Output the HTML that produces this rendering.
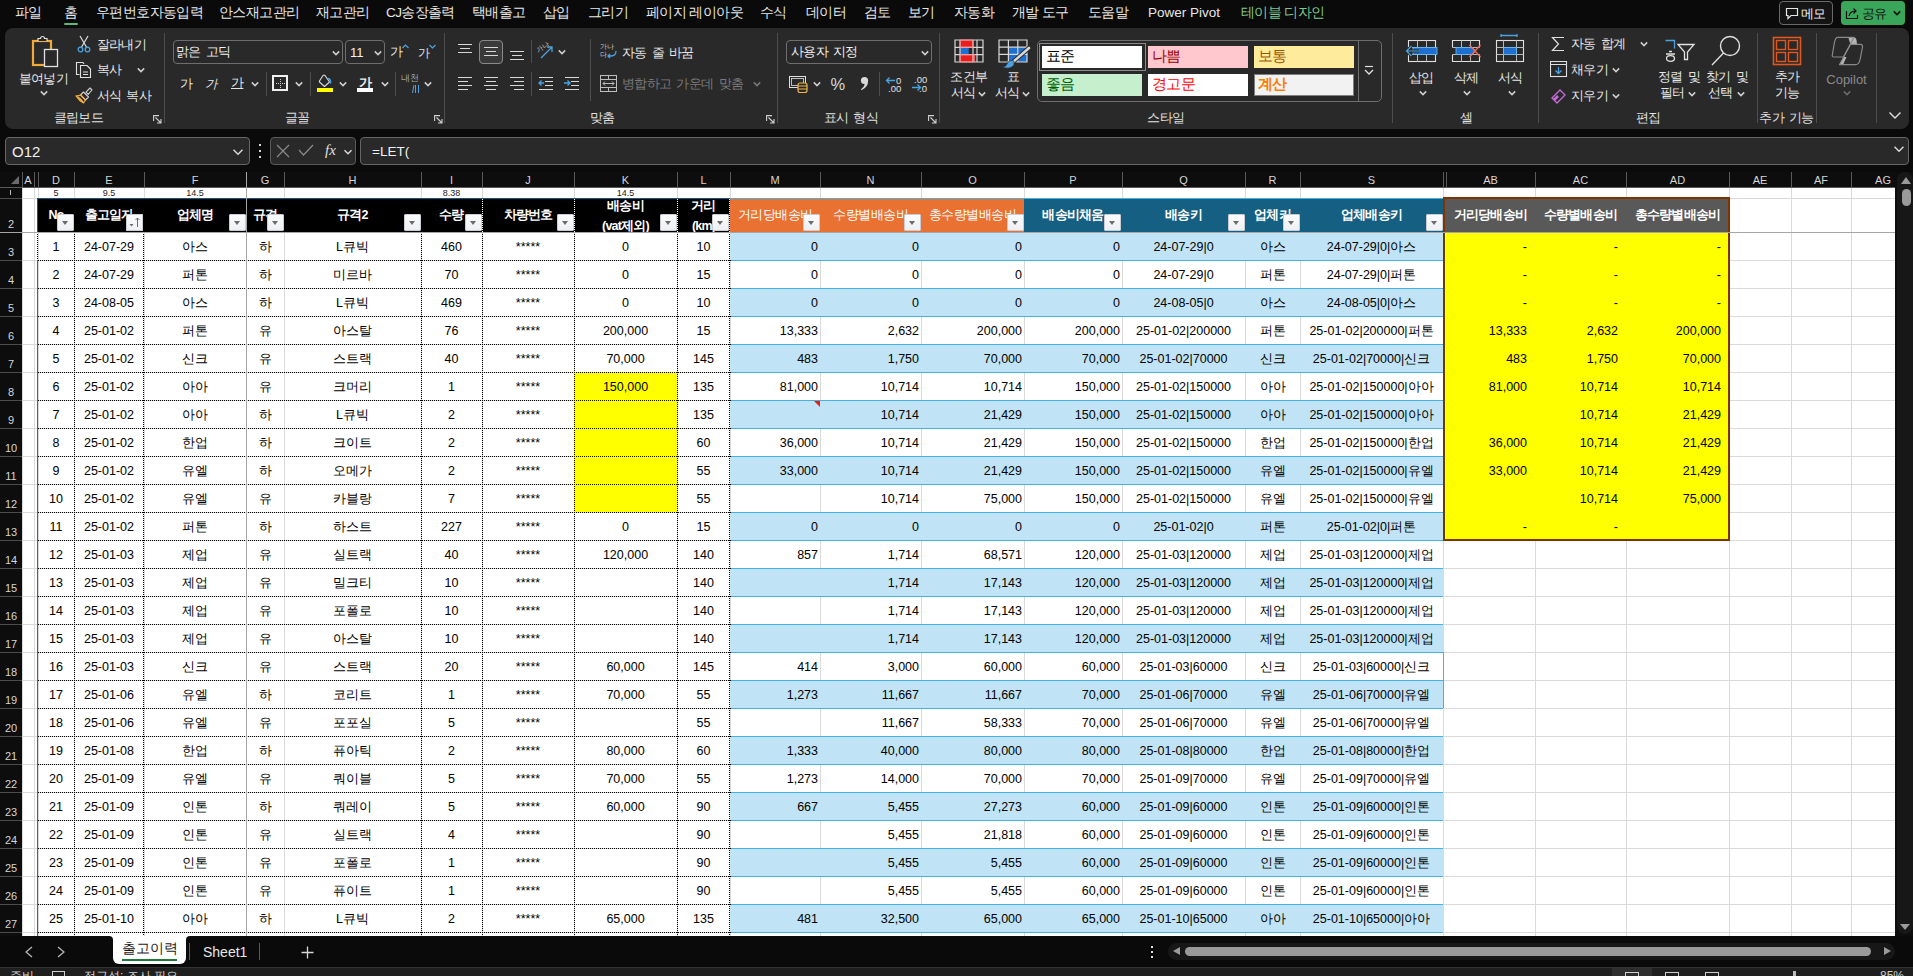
<!DOCTYPE html><html><head><meta charset="utf-8"><style>
*{margin:0;padding:0;box-sizing:border-box}
html,body{width:1913px;height:976px;overflow:hidden;background:#0a0a0a;font-family:"Liberation Sans",sans-serif;}
.a{position:absolute}
svg text{font-family:"Liberation Sans",sans-serif}
.t{position:absolute;white-space:nowrap;line-height:1}
.cell{padding-top:2px;position:absolute;display:flex;align-items:center;white-space:nowrap;font-size:12.5px;color:#000;overflow:hidden;line-height:1}
.cc{justify-content:center}
.cr{justify-content:flex-end;padding-right:2px}
.hd{letter-spacing:-0.8px;position:absolute;display:flex;align-items:center;justify-content:center;white-space:nowrap;font-size:12.5px;color:#fff;font-weight:bold;overflow:hidden;line-height:1}
.fb{position:absolute;width:17px;height:17px;background:linear-gradient(#fafbfc,#eef0f3);border:1px solid #c9cdd3;border-radius:1px}
.fb:after{content:"";position:absolute;left:4px;top:6px;border-left:3.5px solid transparent;border-right:3.5px solid transparent;border-top:4px solid #6b6b6b}
.ch{position:absolute;top:172px;height:15px;display:flex;align-items:center;justify-content:center;font-size:11px;color:#d6d6d6;padding-top:1px}
.rh{position:absolute;left:0;width:22px;display:flex;align-items:flex-end;justify-content:center;font-size:11px;color:#d6d6d6;padding-bottom:2px}
.mt{position:absolute;top:5px;font-size:13.5px;color:#e6e6e6;white-space:nowrap;line-height:16px}
.rl{position:absolute;top:111px;font-size:12.5px;color:#e6e6e6;white-space:nowrap;line-height:14px}
.rt{position:absolute;font-size:12.5px;color:#e6e6e6;white-space:nowrap;line-height:14px}
.sep{position:absolute;width:1px;background:#4a4a4a}
</style></head><body>
<div class="mt" style="left:15px;color:#e6e6e6;letter-spacing:-0.6px;">파일</div>
<div class="mt" style="left:64px;color:#e6e6e6;letter-spacing:-0.6px;">홈</div>
<div class="mt" style="left:96px;color:#e6e6e6;letter-spacing:-0.6px;">우편번호자동입력</div>
<div class="mt" style="left:219px;color:#e6e6e6;letter-spacing:-0.6px;">안스재고관리</div>
<div class="mt" style="left:316px;color:#e6e6e6;letter-spacing:-0.6px;">재고관리</div>
<div class="mt" style="left:386px;color:#e6e6e6;letter-spacing:-0.6px;">CJ송장출력</div>
<div class="mt" style="left:472px;color:#e6e6e6;letter-spacing:-0.6px;">택배출고</div>
<div class="mt" style="left:543px;color:#e6e6e6;letter-spacing:-0.6px;">삽입</div>
<div class="mt" style="left:588px;color:#e6e6e6;letter-spacing:-0.6px;">그리기</div>
<div class="mt" style="left:646px;color:#e6e6e6;letter-spacing:-0.6px;">페이지 레이아웃</div>
<div class="mt" style="left:760px;color:#e6e6e6;letter-spacing:-0.6px;">수식</div>
<div class="mt" style="left:806px;color:#e6e6e6;letter-spacing:-0.6px;">데이터</div>
<div class="mt" style="left:864px;color:#e6e6e6;letter-spacing:-0.6px;">검토</div>
<div class="mt" style="left:908px;color:#e6e6e6;letter-spacing:-0.6px;">보기</div>
<div class="mt" style="left:954px;color:#e6e6e6;letter-spacing:-0.6px;">자동화</div>
<div class="mt" style="left:1012px;color:#e6e6e6;letter-spacing:-0.6px;">개발 도구</div>
<div class="mt" style="left:1088px;color:#e6e6e6;letter-spacing:-0.6px;">도움말</div>
<div class="mt" style="left:1148px;color:#e6e6e6;">Power Pivot</div>
<div class="mt" style="left:1241px;color:#7fc78f;letter-spacing:-0.6px;">테이블 디자인</div>
<div style="position:absolute;left:64px;top:23px;width:14px;height:2px;background:#5fb878;border-radius:1px"></div>
<div style="position:absolute;left:5px;top:28px;width:1904px;height:101px;background:#292929;border-radius:8px"></div>
<div style="position:absolute;left:164px;top:33px;width:1px;height:90px;background:#4d4d4d"></div>
<div style="position:absolute;left:444px;top:33px;width:1px;height:90px;background:#4d4d4d"></div>
<div style="position:absolute;left:777px;top:33px;width:1px;height:90px;background:#4d4d4d"></div>
<div style="position:absolute;left:939px;top:33px;width:1px;height:90px;background:#4d4d4d"></div>
<div style="position:absolute;left:1392px;top:33px;width:1px;height:90px;background:#4d4d4d"></div>
<div style="position:absolute;left:1538px;top:33px;width:1px;height:90px;background:#4d4d4d"></div>
<div style="position:absolute;left:1757px;top:33px;width:1px;height:90px;background:#4d4d4d"></div>
<div style="position:absolute;left:1816px;top:33px;width:1px;height:90px;background:#4d4d4d"></div>
<div style="position:absolute;left:1876px;top:33px;width:1px;height:90px;background:#4d4d4d"></div>
<div style="position:absolute;left:590px;top:39px;width:1px;height:62px;background:#4d4d4d"></div>
<div style="position:absolute;left:266px;top:72px;width:1px;height:24px;background:#4d4d4d"></div>
<div style="position:absolute;left:310px;top:72px;width:1px;height:24px;background:#4d4d4d"></div>
<div style="position:absolute;left:395px;top:72px;width:1px;height:24px;background:#4d4d4d"></div>
<div style="position:absolute;left:531px;top:40px;width:1px;height:23px;background:#4d4d4d"></div>
<div style="position:absolute;left:531px;top:72px;width:1px;height:24px;background:#4d4d4d"></div>
<div style="position:absolute;left:879px;top:72px;width:1px;height:24px;background:#4d4d4d"></div>
<div class="t" style="left:33.5px;width:90px;text-align:center;top:112.4px;font-size:12.5px;color:#e0e0e0;letter-spacing:-0.6px;word-spacing:2px;">클립보드</div>
<div class="t" style="left:252.0px;width:90px;text-align:center;top:112.4px;font-size:12.5px;color:#e0e0e0;letter-spacing:-0.6px;word-spacing:2px;">글꼴</div>
<div class="t" style="left:557.5px;width:90px;text-align:center;top:112.4px;font-size:12.5px;color:#e0e0e0;letter-spacing:-0.6px;word-spacing:2px;">맞춤</div>
<div class="t" style="left:806.0px;width:90px;text-align:center;top:112.4px;font-size:12.5px;color:#e0e0e0;letter-spacing:-0.6px;word-spacing:2px;">표시 형식</div>
<div class="t" style="left:1121.0px;width:90px;text-align:center;top:112.4px;font-size:12.5px;color:#e0e0e0;letter-spacing:-0.6px;word-spacing:2px;">스타일</div>
<div class="t" style="left:1421.0px;width:90px;text-align:center;top:112.4px;font-size:12.5px;color:#e0e0e0;letter-spacing:-0.6px;word-spacing:2px;">셀</div>
<div class="t" style="left:1603.0px;width:90px;text-align:center;top:112.4px;font-size:12.5px;color:#e0e0e0;letter-spacing:-0.6px;word-spacing:2px;">편집</div>
<div class="t" style="left:1741.5px;width:90px;text-align:center;top:112.4px;font-size:12.5px;color:#e0e0e0;letter-spacing:-0.6px;word-spacing:2px;">추가 기능</div>
<svg class="a" style="left:153px;top:115px;" width="9" height="9" viewBox="0 0 9 9"><path d="M0.6 6V0.6H6" fill="none" stroke="#d0d0d0" stroke-width="1.1"/><path d="M2.5 2.5L8 8M8 4V8H4" fill="none" stroke="#d0d0d0" stroke-width="1.1"/></svg>
<svg class="a" style="left:434px;top:115px;" width="9" height="9" viewBox="0 0 9 9"><path d="M0.6 6V0.6H6" fill="none" stroke="#d0d0d0" stroke-width="1.1"/><path d="M2.5 2.5L8 8M8 4V8H4" fill="none" stroke="#d0d0d0" stroke-width="1.1"/></svg>
<svg class="a" style="left:766px;top:115px;" width="9" height="9" viewBox="0 0 9 9"><path d="M0.6 6V0.6H6" fill="none" stroke="#d0d0d0" stroke-width="1.1"/><path d="M2.5 2.5L8 8M8 4V8H4" fill="none" stroke="#d0d0d0" stroke-width="1.1"/></svg>
<svg class="a" style="left:928px;top:115px;" width="9" height="9" viewBox="0 0 9 9"><path d="M0.6 6V0.6H6" fill="none" stroke="#d0d0d0" stroke-width="1.1"/><path d="M2.5 2.5L8 8M8 4V8H4" fill="none" stroke="#d0d0d0" stroke-width="1.1"/></svg>
<svg class="a" style="left:30px;top:35px;" width="30" height="33" viewBox="0 0 30 33"><rect x="3" y="6" width="18" height="24" fill="none" stroke="#f2a93b" stroke-width="2.2"/><path d="M8 6 V3.5 H10.5 A2 2 0 0 1 14.5 3.5 H17 V6" fill="#292929" stroke="#e0e0e0" stroke-width="1.2"/><rect x="14.5" y="14.5" width="13" height="17" fill="#292929" stroke="#e0e0e0" stroke-width="1.3"/></svg>
<div class="t" style="left:13.5px;width:60px;text-align:center;top:72.9px;font-size:12.5px;color:#e6e6e6;letter-spacing:-0.6px;word-spacing:2px;">붙여넣기</div>
<svg class="a" style="left:39px;top:89px;" width="10" height="8" viewBox="0 0 10 8"><path d="M1.7999999999999998 2.4 L5 5.6 L8.2 2.4" fill="none" stroke="#d0d0d0" stroke-width="1.5"/></svg>
<svg class="a" style="left:77px;top:35px;" width="14" height="18" viewBox="0 0 14 18"><path d="M3 1 L10 13 M11 1 L4 13" stroke="#e0e0e0" stroke-width="1.2" fill="none"/><circle cx="3.5" cy="14.5" r="2.3" fill="none" stroke="#4aa3e0" stroke-width="1.3"/><circle cx="10.5" cy="14.5" r="2.3" fill="none" stroke="#4aa3e0" stroke-width="1.3"/></svg>
<div class="t" style="left:96.5px;top:38.7px;font-size:12.5px;color:#e6e6e6;letter-spacing:-0.6px;word-spacing:2px;">잘라내기</div>
<svg class="a" style="left:75px;top:61px;" width="18" height="18" viewBox="0 0 18 18"><path d="M4.5 13.5 H1.5 V1.5 H8 L9 3" fill="none" stroke="#e0e0e0" stroke-width="1.1"/><path d="M5.5 4.5 H12 L15.5 8 V16.5 H5.5 Z" fill="none" stroke="#e0e0e0" stroke-width="1.1"/><path d="M8 11H13M8 13.5H13" stroke="#e0e0e0" stroke-width="1"/></svg>
<div class="t" style="left:96.5px;top:64.4px;font-size:12.5px;color:#e6e6e6;letter-spacing:-0.6px;word-spacing:2px;">복사</div>
<svg class="a" style="left:135.5px;top:66px;" width="10" height="8" viewBox="0 0 10 8"><path d="M1.7999999999999998 2.4 L5 5.6 L8.2 2.4" fill="none" stroke="#d0d0d0" stroke-width="1.5"/></svg>
<svg class="a" style="left:75px;top:87px;" width="18" height="18" viewBox="0 0 18 18"><path d="M15 1 L17 3 L13.2 7.3 L11 5.2Z" fill="none" stroke="#d0d0d0" stroke-width="1.1" stroke-linejoin="round"/><path d="M8.5 5 L13.5 10 L10.5 13 L5.5 8Z" fill="none" stroke="#d0d0d0" stroke-width="1.1" stroke-linejoin="round"/><path d="M5.5 8 L10.5 13 L8.5 16 Q4.5 14 1 8.8 Q3.5 9.2 5.5 8Z" fill="none" stroke="#f0b040" stroke-width="1.2" stroke-linejoin="round"/><path d="M4 11 L8.5 15.5 L6 13.8Z M3 10 Q6 12 8 15" fill="#f0b040" stroke="#f0b040" stroke-width="1.3"/></svg>
<div class="t" style="left:96.5px;top:90.4px;font-size:12.5px;color:#e6e6e6;letter-spacing:-0.6px;word-spacing:2px;">서식 복사</div>
<div style="position:absolute;left:173px;top:40px;width:170px;height:24px;border:1px solid #6e6e6e;border-radius:4px;background:#292929"></div>
<div class="t" style="left:176px;top:46.4px;font-size:12.5px;color:#f0f0f0;letter-spacing:-0.6px;word-spacing:2px;">맑은 고딕</div>
<svg class="a" style="left:331px;top:49px;" width="10" height="8" viewBox="0 0 10 8"><path d="M1.7999999999999998 2.4 L5 5.6 L8.2 2.4" fill="none" stroke="#d0d0d0" stroke-width="1.5"/></svg>
<div style="position:absolute;left:345px;top:40px;width:40px;height:24px;border:1px solid #6e6e6e;border-radius:4px;background:#292929"></div>
<div class="t" style="left:350px;top:46.1px;font-size:13px;color:#f0f0f0;">11</div>
<svg class="a" style="left:373px;top:49px;" width="10" height="8" viewBox="0 0 10 8"><path d="M1.7999999999999998 2.4 L5 5.6 L8.2 2.4" fill="none" stroke="#d0d0d0" stroke-width="1.5"/></svg>
<div class="t" style="left:390px;top:46.4px;font-size:12.5px;color:#e6e6e6;letter-spacing:-0.6px;word-spacing:2px;">가</div>
<svg class="a" style="left:402px;top:44px;" width="7" height="5" viewBox="0 0 7 5"><path d="M0.5 4 L3.5 1 L6.5 4" fill="none" stroke="#4aa3e0" stroke-width="1.2"/></svg>
<div class="t" style="left:418px;top:47.8px;font-size:11.5px;color:#e6e6e6;letter-spacing:-0.6px;word-spacing:2px;">가</div>
<svg class="a" style="left:429px;top:44px;" width="7" height="5" viewBox="0 0 7 5"><path d="M0.5 1 L3.5 4 L6.5 1" fill="none" stroke="#4aa3e0" stroke-width="1.2"/></svg>
<div class="t" style="left:180px;top:78.4px;font-size:12.5px;color:#e6e6e6;letter-spacing:-0.6px;word-spacing:2px;">가</div>
<div class="t" style="left:205px;top:78.4px;font-size:12.5px;color:#e6e6e6;letter-spacing:-0.6px;word-spacing:2px;font-style:italic">가</div>
<div class="t" style="left:231px;top:77.4px;font-size:12.5px;color:#e6e6e6;letter-spacing:-0.6px;word-spacing:2px;text-decoration:underline">가</div>
<svg class="a" style="left:250px;top:80px;" width="10" height="8" viewBox="0 0 10 8"><path d="M1.7999999999999998 2.4 L5 5.6 L8.2 2.4" fill="none" stroke="#d0d0d0" stroke-width="1.5"/></svg>
<svg class="a" style="left:294px;top:80px;" width="10" height="8" viewBox="0 0 10 8"><path d="M1.7999999999999998 2.4 L5 5.6 L8.2 2.4" fill="none" stroke="#d0d0d0" stroke-width="1.5"/></svg>
<svg class="a" style="left:338px;top:80px;" width="10" height="8" viewBox="0 0 10 8"><path d="M1.7999999999999998 2.4 L5 5.6 L8.2 2.4" fill="none" stroke="#d0d0d0" stroke-width="1.5"/></svg>
<svg class="a" style="left:380px;top:80px;" width="10" height="8" viewBox="0 0 10 8"><path d="M1.7999999999999998 2.4 L5 5.6 L8.2 2.4" fill="none" stroke="#d0d0d0" stroke-width="1.5"/></svg>
<svg class="a" style="left:423px;top:80px;" width="10" height="8" viewBox="0 0 10 8"><path d="M1.7999999999999998 2.4 L5 5.6 L8.2 2.4" fill="none" stroke="#d0d0d0" stroke-width="1.5"/></svg>
<svg class="a" style="left:272px;top:75px;" width="17" height="17" viewBox="0 0 17 17"><rect x="1" y="1" width="14" height="14" fill="none" stroke="#f0f0f0" stroke-width="2"/><path d="M8.5 4V13M4 8.5H13" stroke="#cfcfcf" stroke-width="1" stroke-dasharray="1 1"/></svg>
<svg class="a" style="left:316px;top:73px;" width="18" height="20" viewBox="0 0 18 20"><path d="M7 2.5 Q8 1.5 9 2.5 L13.5 9 L8.5 13.5 L3.5 9 Q3 8.3 3.8 7.5Z" fill="none" stroke="#d8d8d8" stroke-width="1.1" stroke-linejoin="round"/><path d="M12 5.5 Q15 6 14.5 10.5" stroke="#4aa3e0" stroke-width="1.5" fill="none"/><rect x="1" y="15" width="16" height="4" fill="#ffff00"/></svg>
<div class="t" style="left:359px;top:76.2px;font-size:13px;color:#f0f0f0;letter-spacing:-0.6px;word-spacing:2px;font-weight:bold">가</div>
<div style="position:absolute;left:357px;top:88px;width:16px;height:4px;background:#fff"></div>
<div class="t" style="left:401px;top:74.2px;font-size:8.5px;color:#a8a8a8;letter-spacing:-0.5px">내천</div>
<svg class="a" style="left:411px;top:84px;" width="9" height="10" viewBox="0 0 9 10"><path d="M1.5 9 L3 1M4.5 9V1M7.5 9V1" stroke="#4aa3e0" stroke-width="1" fill="none"/></svg>
<svg class="a" style="left:458px;top:44px;" width="16" height="16" viewBox="0 0 16 16"><rect x="0" y="0" width="14" height="1" fill="#d8d8d8"/><rect x="2" y="4" width="10" height="1" fill="#d8d8d8"/><rect x="0" y="8" width="14" height="1" fill="#d8d8d8"/></svg>
<div style="position:absolute;left:479px;top:40px;width:24px;height:24px;border:1px solid #8a8a8a;border-radius:4px;background:#3a3a3a"></div>
<svg class="a" style="left:484px;top:47px;" width="16" height="16" viewBox="0 0 16 16"><rect x="0" y="0" width="14" height="1" fill="#d8d8d8"/><rect x="2" y="4" width="10" height="1" fill="#d8d8d8"/><rect x="0" y="8" width="14" height="1" fill="#d8d8d8"/></svg>
<svg class="a" style="left:510px;top:51px;" width="16" height="16" viewBox="0 0 16 16"><rect x="0" y="0" width="14" height="1" fill="#d8d8d8"/><rect x="2" y="4" width="10" height="1" fill="#d8d8d8"/><rect x="0" y="8" width="14" height="1" fill="#d8d8d8"/></svg>
<svg class="a" style="left:458px;top:77px;" width="16" height="16" viewBox="0 0 16 16"><rect x="0" y="0" width="14" height="1" fill="#d8d8d8"/><rect x="0" y="4" width="10" height="1" fill="#d8d8d8"/><rect x="0" y="8" width="14" height="1" fill="#d8d8d8"/><rect x="0" y="12" width="10" height="1" fill="#d8d8d8"/></svg>
<svg class="a" style="left:484px;top:77px;" width="16" height="16" viewBox="0 0 16 16"><rect x="0" y="0" width="14" height="1" fill="#d8d8d8"/><rect x="2" y="4" width="10" height="1" fill="#d8d8d8"/><rect x="0" y="8" width="14" height="1" fill="#d8d8d8"/><rect x="2" y="12" width="10" height="1" fill="#d8d8d8"/></svg>
<svg class="a" style="left:510px;top:77px;" width="16" height="16" viewBox="0 0 16 16"><rect x="0" y="0" width="14" height="1" fill="#d8d8d8"/><rect x="4" y="4" width="10" height="1" fill="#d8d8d8"/><rect x="0" y="8" width="14" height="1" fill="#d8d8d8"/><rect x="4" y="12" width="10" height="1" fill="#d8d8d8"/></svg>
<svg class="a" style="left:537px;top:42px;" width="18" height="18" viewBox="0 0 18 18"><text x="0" y="9" font-size="7" fill="#cfcfcf" transform="rotate(-35 4 8)">가나</text><path d="M4 16 L15 5 M10 5 H15 V10" stroke="#4aa3e0" stroke-width="1.3" fill="none"/></svg>
<svg class="a" style="left:557px;top:48px;" width="10" height="8" viewBox="0 0 10 8"><path d="M1.7999999999999998 2.4 L5 5.6 L8.2 2.4" fill="none" stroke="#d0d0d0" stroke-width="1.5"/></svg>
<svg class="a" style="left:538px;top:76px;" width="16" height="15" viewBox="0 0 16 15"><path d="M1 1.5H15M7 5.5H15M7 9.5H15M1 13.5H15" stroke="#d8d8d8" stroke-width="1"/><path d="M6 7H1M3.5 4.5L1 7L3.5 9.5" stroke="#4aa3e0" stroke-width="1.3" fill="none"/></svg>
<svg class="a" style="left:564px;top:76px;" width="16" height="15" viewBox="0 0 16 15"><path d="M1 1.5H15M7 5.5H15M7 9.5H15M1 13.5H15" stroke="#d8d8d8" stroke-width="1"/><path d="M0 7H6M3.5 4.5L6 7L3.5 9.5" stroke="#4aa3e0" stroke-width="1.3" fill="none"/></svg>
<svg class="a" style="left:600px;top:42px;" width="18" height="20" viewBox="0 0 18 20"><text x="0" y="7" font-size="7" fill="#cfcfcf">가나</text><text x="0" y="15" font-size="7" fill="#cfcfcf">다</text><path d="M16 9 Q16 14 11 14 H8 M10 12 L8 14 L10 16" stroke="#4aa3e0" stroke-width="1.3" fill="none"/></svg>
<div class="t" style="left:622px;top:46.8px;font-size:12.5px;color:#e6e6e6;letter-spacing:-0.6px;word-spacing:2px;">자동 줄 바꿈</div>
<svg class="a" style="left:600px;top:75px;" width="17" height="17" viewBox="0 0 17 17"><rect x="0.5" y="0.5" width="16" height="16" fill="none" stroke="#bdbdbd"/><path d="M0.5 4.5H16.5M0.5 12.5H16.5M8.5 0.5V4.5M8.5 12.5V16.5" stroke="#bdbdbd"/><path d="M3 8.5H14M5 6.5L3 8.5L5 10.5M12 6.5L14 8.5L12 10.5" stroke="#bdbdbd" fill="none"/></svg>
<div class="t" style="left:622px;top:77.7px;font-size:12.5px;color:#7a7a7a;letter-spacing:-0.6px;word-spacing:2px;">병합하고 가운데 맞춤</div>
<svg class="a" style="left:752px;top:80px;" width="10" height="8" viewBox="0 0 10 8"><path d="M1.7999999999999998 2.4 L5 5.6 L8.2 2.4" fill="none" stroke="#7a7a7a" stroke-width="1.5"/></svg>
<div style="position:absolute;left:786px;top:40px;width:146px;height:24px;border:1px solid #6e6e6e;border-radius:4px;background:#292929"></div>
<div class="t" style="left:791px;top:46.4px;font-size:12.5px;color:#f0f0f0;letter-spacing:-0.6px;word-spacing:2px;">사용자 지정</div>
<svg class="a" style="left:920px;top:49px;" width="10" height="8" viewBox="0 0 10 8"><path d="M1.7999999999999998 2.4 L5 5.6 L8.2 2.4" fill="none" stroke="#d0d0d0" stroke-width="1.5"/></svg>
<svg class="a" style="left:789px;top:76px;" width="19" height="17" viewBox="0 0 19 17"><rect x="0.5" y="0.5" width="16" height="11" fill="none" stroke="#e0e0e0"/><rect x="2.5" y="2.5" width="12" height="7" fill="none" stroke="#e0e0e0" stroke-width="0.8"/><rect x="9" y="7" width="9" height="9.5" rx="2" fill="#292929" stroke="#f2b84b" stroke-width="1.2"/><path d="M9 10H18M9 13H18" stroke="#f2b84b"/></svg>
<svg class="a" style="left:811.5px;top:80px;" width="10" height="8" viewBox="0 0 10 8"><path d="M1.7999999999999998 2.4 L5 5.6 L8.2 2.4" fill="none" stroke="#d0d0d0" stroke-width="1.5"/></svg>
<div class="t" style="left:830.5px;top:75.6px;font-size:16.5px;color:#d8d8d8;">%</div>
<svg class="a" style="left:859px;top:76px;" width="11" height="15" viewBox="0 0 11 15"><circle cx="5.5" cy="4.5" r="3.6" fill="#d8d8d8"/><path d="M8.9 4.5 Q9.5 11 2.5 14.2 L2 13.2 Q5.8 10.5 5.6 7.5Z" fill="#d8d8d8"/></svg>
<svg class="a" style="left:884px;top:75px;" width="19" height="18" viewBox="0 0 19 18"><text x="12" y="9" font-size="9.5" fill="#e0e0e0" font-family="Liberation Sans">0</text><text x="4" y="17" font-size="9.5" fill="#e0e0e0" font-family="Liberation Sans">.00</text><path d="M11 5.5H2.5M5.5 2.5L2.5 5.5L5.5 8.5" stroke="#4aa3e0" stroke-width="1.3" fill="none"/></svg>
<svg class="a" style="left:910px;top:74px;" width="19" height="19" viewBox="0 0 19 19"><text x="4" y="9" font-size="9.5" fill="#e0e0e0" font-family="Liberation Sans">.00</text><text x="9" y="17.5" font-size="9.5" fill="#e0e0e0" font-family="Liberation Sans">.0</text><path d="M2 13.5H10.5M7.5 10.5L10.5 13.5L7.5 16.5" stroke="#4aa3e0" stroke-width="1.3" fill="none"/></svg>
<svg class="a" style="left:954px;top:39px;" width="30" height="24" viewBox="0 0 30 24"><rect x="6" y="1" width="13" height="7.3" fill="#e81e1e"/><rect x="6" y="8.3" width="8.7" height="7.3" fill="#1e6fd0"/><rect x="6" y="15.6" width="14.7" height="7.4" fill="#e81e1e"/><path d="M1 1H29V23H1Z M1 8.3H29 M1 15.6H29 M6 1V23 M19 1V23 M23 1V23" fill="none" stroke="#d8d8d8" stroke-width="1.2"/><path d="M6 1H19V8.3H6Z M6 15.6H20.7V23H6Z" fill="none" stroke="#ff8080" stroke-width="0.8"/></svg>
<div class="t" style="left:939.0px;width:60px;text-align:center;top:71.4px;font-size:12.5px;color:#e6e6e6;letter-spacing:-0.6px;word-spacing:2px;">조건부</div>
<div class="t" style="left:951px;top:87.4px;font-size:12.5px;color:#e6e6e6;letter-spacing:-1px">서식</div>
<svg class="a" style="left:977px;top:90px;" width="10" height="8" viewBox="0 0 10 8"><path d="M1.7999999999999998 2.4 L5 5.6 L8.2 2.4" fill="none" stroke="#d0d0d0" stroke-width="1.5"/></svg>
<svg class="a" style="left:998px;top:39px;" width="34" height="30" viewBox="0 0 34 30"><rect x="10.4" y="8.2" width="18.6" height="14.8" fill="#1e6fd0"/><path d="M1 1H29V23H1Z M1 8.2H29 M1 15.4H29 M10.4 1V23 M19.8 1V23" fill="none" stroke="#d8d8d8" stroke-width="1.2"/><path d="M31 9 L15 23" stroke="#292929" stroke-width="4.5" stroke-linecap="round"/><path d="M31 9 L15 23" stroke="#d8d8d8" stroke-width="2.6" stroke-linecap="round"/><path d="M16 22 Q11 20 9 25 Q8 28 4 28 Q12 31 16 26 Z" fill="#4aa3e0" stroke="#292929" stroke-width="0.6"/></svg>
<div class="t" style="left:998.0px;width:30px;text-align:center;top:71.4px;font-size:12.5px;color:#e6e6e6;letter-spacing:-0.6px;word-spacing:2px;">표</div>
<div class="t" style="left:995px;top:87.4px;font-size:12.5px;color:#e6e6e6;letter-spacing:-1px">서식</div>
<svg class="a" style="left:1021px;top:90px;" width="10" height="8" viewBox="0 0 10 8"><path d="M1.7999999999999998 2.4 L5 5.6 L8.2 2.4" fill="none" stroke="#d0d0d0" stroke-width="1.5"/></svg>
<div style="position:absolute;left:1037px;top:40px;width:345px;height:62px;border:1px solid #6e6e6e;border-radius:5px"></div>
<div style="position:absolute;left:1358px;top:41px;width:1px;height:60px;background:#6e6e6e"></div>
<svg class="a" style="left:1363px;top:65px;" width="12" height="12" viewBox="0 0 12 12"><path d="M2 1.5H10" stroke="#e0e0e0" stroke-width="1.2"/><path d="M2 5 L6 9 L10 5" stroke="#e0e0e0" stroke-width="1.3" fill="none"/></svg>
<div style="position:absolute;left:1039px;top:43px;width:107px;height:28px;border:1.5px solid #8a8a8a"></div>
<div style="position:absolute;left:1042px;top:46px;width:100px;height:22px;background:#ffffff;"></div>
<div class="t" style="left:1046px;top:48.5px;font-size:14.5px;color:#000;letter-spacing:-0.6px;word-spacing:2px;">표준</div>
<div style="position:absolute;left:1148px;top:46px;width:100px;height:22px;background:#ffc7ce;"></div>
<div class="t" style="left:1152px;top:48.5px;font-size:14.5px;color:#9c0006;letter-spacing:-0.6px;word-spacing:2px;">나쁨</div>
<div style="position:absolute;left:1254px;top:46px;width:100px;height:22px;background:#ffeb9c;"></div>
<div class="t" style="left:1258px;top:48.5px;font-size:14.5px;color:#9c5700;letter-spacing:-0.6px;word-spacing:2px;">보통</div>
<div style="position:absolute;left:1042px;top:74px;width:100px;height:22px;background:#c6efce;"></div>
<div class="t" style="left:1046px;top:76.5px;font-size:14.5px;color:#006100;letter-spacing:-0.6px;word-spacing:2px;">좋음</div>
<div style="position:absolute;left:1148px;top:74px;width:100px;height:22px;background:#ffffff;"></div>
<div class="t" style="left:1152px;top:76.5px;font-size:14.5px;color:#ff0000;letter-spacing:-0.6px;word-spacing:2px;">경고문</div>
<div style="position:absolute;left:1254px;top:74px;width:100px;height:22px;background:#f2f2f2;border:1px solid #7f7f7f"></div>
<div class="t" style="left:1258px;top:76.5px;font-size:14.5px;color:#fa7d00;letter-spacing:-0.6px;word-spacing:2px;font-weight:bold">계산</div>
<svg class="a" style="left:1405px;top:40px;" width="34" height="23" viewBox="0 0 34 23"><rect x="3.5" y="0.5" width="27" height="21" fill="none" stroke="#e0e0e0" stroke-width="1.1"/><path d="M12.5 0.5V21.5M21.5 0.5V21.5M3.5 7.5H30.5M3.5 14.5H30.5" stroke="#b8b8b8"/><rect x="8" y="7.5" width="24" height="7" fill="#1e6fd0" stroke="#6cc0f0" stroke-width="0.8"/><path d="M14 11H1.5M6.5 6L1.5 11L6.5 16" stroke="#292929" stroke-width="3" fill="none"/><path d="M14 11H1.5M6.5 6L1.5 11L6.5 16" stroke="#4aa3e0" stroke-width="1.2" fill="none"/></svg>
<div class="t" style="left:1401.5px;width:40px;text-align:center;top:72.4px;font-size:12.5px;color:#e6e6e6;letter-spacing:-0.6px;word-spacing:2px;">삽입</div>
<svg class="a" style="left:1418px;top:89px;" width="10" height="8" viewBox="0 0 10 8"><path d="M1.7999999999999998 2.4 L5 5.6 L8.2 2.4" fill="none" stroke="#d0d0d0" stroke-width="1.5"/></svg>
<svg class="a" style="left:1451px;top:40px;" width="32" height="23" viewBox="0 0 32 23"><path d="M1.5 7.5V0.5H28.5V7.5 M1.5 14.5V21.5H28.5V14.5" fill="none" stroke="#e0e0e0" stroke-width="1.1"/><path d="M10.5 0.5V21.5M19.5 0.5V21.5M1.5 7.5H28.5M1.5 14.5H28.5" stroke="#b8b8b8"/><path d="M5 7.5H21 L25 11 L21 14.5H5Z" fill="#1e6fd0" stroke="#6cc0f0" stroke-width="0.8"/><path d="M18.5 5 L29.5 17 M29.5 5 L18.5 17" stroke="#f06a5a" stroke-width="1.3"/></svg>
<div class="t" style="left:1446.0px;width:40px;text-align:center;top:72.4px;font-size:12.5px;color:#e6e6e6;letter-spacing:-0.6px;word-spacing:2px;">삭제</div>
<svg class="a" style="left:1462px;top:89px;" width="10" height="8" viewBox="0 0 10 8"><path d="M1.7999999999999998 2.4 L5 5.6 L8.2 2.4" fill="none" stroke="#d0d0d0" stroke-width="1.5"/></svg>
<svg class="a" style="left:1495px;top:34px;" width="30" height="29" viewBox="0 0 30 29"><path d="M6 1.5H22M6 0V3M22 0V3" stroke="#4aa3e0" stroke-width="1.3"/><rect x="1.5" y="6.5" width="27" height="21" fill="none" stroke="#e0e0e0" stroke-width="1.1"/><path d="M8.5 6.5V27.5M21.5 6.5V27.5M1.5 13.5H28.5M1.5 20.5H28.5" stroke="#b8b8b8"/><rect x="8.5" y="13.5" width="13" height="7" fill="#1e6fd0" stroke="#6cc0f0" stroke-width="0.8"/></svg>
<div class="t" style="left:1490.0px;width:40px;text-align:center;top:72.4px;font-size:12.5px;color:#e6e6e6;letter-spacing:-0.6px;word-spacing:2px;">서식</div>
<svg class="a" style="left:1506.5px;top:89px;" width="10" height="8" viewBox="0 0 10 8"><path d="M1.7999999999999998 2.4 L5 5.6 L8.2 2.4" fill="none" stroke="#d0d0d0" stroke-width="1.5"/></svg>
<svg class="a" style="left:1551px;top:36px;" width="15" height="16" viewBox="0 0 15 16"><path d="M13 1.5H1.5L7.5 8L1.5 14.5H13" fill="none" stroke="#e0e0e0" stroke-width="1.2"/></svg>
<div class="t" style="left:1571px;top:38.4px;font-size:12.5px;color:#e6e6e6;letter-spacing:-0.6px;word-spacing:2px;">자동 합계</div>
<svg class="a" style="left:1638.5px;top:40px;" width="10" height="8" viewBox="0 0 10 8"><path d="M1.7999999999999998 2.4 L5 5.6 L8.2 2.4" fill="none" stroke="#d0d0d0" stroke-width="1.5"/></svg>
<svg class="a" style="left:1550px;top:61px;" width="18" height="17" viewBox="0 0 18 17"><rect x="0.5" y="0.5" width="16" height="15" fill="none" stroke="#e0e0e0" stroke-width="1.1"/><path d="M0.5 3.5H16.5" stroke="#e0e0e0"/><path d="M8.5 6V12.5M5.5 9.5L8.5 12.5L11.5 9.5" stroke="#4aa3e0" stroke-width="1.3" fill="none"/></svg>
<div class="t" style="left:1571px;top:64.4px;font-size:12.5px;color:#e6e6e6;letter-spacing:-0.6px;word-spacing:2px;">채우기</div>
<svg class="a" style="left:1611px;top:66px;" width="10" height="8" viewBox="0 0 10 8"><path d="M1.7999999999999998 2.4 L5 5.6 L8.2 2.4" fill="none" stroke="#d0d0d0" stroke-width="1.5"/></svg>
<svg class="a" style="left:1550px;top:87px;" width="17" height="17" viewBox="0 0 17 17"><path d="M2 11 L10 3 L15 8 L7 16 Z" fill="none" stroke="#c76bd8" stroke-width="1.3"/><path d="M4 13 L8 9" stroke="#c76bd8" stroke-width="2.5"/></svg>
<div class="t" style="left:1571px;top:90.4px;font-size:12.5px;color:#e6e6e6;letter-spacing:-0.6px;word-spacing:2px;">지우기</div>
<svg class="a" style="left:1611px;top:92px;" width="10" height="8" viewBox="0 0 10 8"><path d="M1.7999999999999998 2.4 L5 5.6 L8.2 2.4" fill="none" stroke="#d0d0d0" stroke-width="1.5"/></svg>
<svg class="a" style="left:1663px;top:38px;" width="33" height="26" viewBox="0 0 33 26"><path d="M2.5 2.5H11.5V10.5" stroke="#4aa3e0" stroke-width="1.3" fill="none"/><path d="M6 13.5H9M3 16H12" stroke="#e0e0e0" stroke-width="1.3"/><ellipse cx="7.5" cy="20.5" rx="4" ry="2.8" fill="none" stroke="#e0e0e0" stroke-width="1.3"/><path d="M15 6.5H31L24.5 14V21.5H21.5V14Z" fill="none" stroke="#e0e0e0" stroke-width="1.3"/></svg>
<div class="t" style="left:1649.0px;width:60px;text-align:center;top:71.4px;font-size:12.5px;color:#e6e6e6;letter-spacing:-0.6px;word-spacing:2px;">정렬 및</div>
<div class="t" style="left:1660px;top:87.4px;font-size:12.5px;color:#e6e6e6;letter-spacing:-1px">필터</div>
<svg class="a" style="left:1687px;top:90px;" width="10" height="8" viewBox="0 0 10 8"><path d="M1.7999999999999998 2.4 L5 5.6 L8.2 2.4" fill="none" stroke="#d0d0d0" stroke-width="1.5"/></svg>
<svg class="a" style="left:1710px;top:35px;" width="32" height="32" viewBox="0 0 32 32"><circle cx="20" cy="11" r="9.5" fill="none" stroke="#e0e0e0" stroke-width="1.4"/><path d="M13.5 18 L2 30" stroke="#e0e0e0" stroke-width="1.4"/></svg>
<div class="t" style="left:1697.0px;width:60px;text-align:center;top:71.4px;font-size:12.5px;color:#e6e6e6;letter-spacing:-0.6px;word-spacing:2px;">찾기 및</div>
<div class="t" style="left:1708px;top:87.4px;font-size:12.5px;color:#e6e6e6;letter-spacing:-1px">선택</div>
<svg class="a" style="left:1736px;top:90px;" width="10" height="8" viewBox="0 0 10 8"><path d="M1.7999999999999998 2.4 L5 5.6 L8.2 2.4" fill="none" stroke="#d0d0d0" stroke-width="1.5"/></svg>
<svg class="a" style="left:1772px;top:36px;" width="30" height="30" viewBox="0 0 30 30"><rect x="1.5" y="1.5" width="27" height="27" fill="none" stroke="#e2571e" stroke-width="1.6"/><rect x="4.5" y="4.5" width="9" height="9" fill="none" stroke="#e2571e" stroke-width="1.4"/><rect x="16.5" y="4.5" width="9" height="9" fill="none" stroke="#e2571e" stroke-width="1.4"/><rect x="4.5" y="16.5" width="9" height="9" fill="none" stroke="#e2571e" stroke-width="1.4"/><rect x="16.5" y="16.5" width="9" height="9" fill="none" stroke="#e2571e" stroke-width="1.4"/></svg>
<div class="t" style="left:1767.0px;width:40px;text-align:center;top:71.4px;font-size:12.5px;color:#e6e6e6;letter-spacing:-0.6px;word-spacing:2px;">추가</div>
<div class="t" style="left:1767.0px;width:40px;text-align:center;top:87.4px;font-size:12.5px;color:#e6e6e6;letter-spacing:-0.6px;word-spacing:2px;">기능</div>
<svg class="a" style="left:1830px;top:36px;" width="34" height="30" viewBox="0 0 34 30"><path d="M18.5 2.2 Q20 1.3 24 1.3 Q26 1.3 26.5 4 L27 8.3 H20.5Z" fill="#b4b4b4"/><path d="M9.5 28.7 L13.5 21 H16.5 L13 28.7Z" fill="#b4b4b4"/><path d="M8 1.3 H24 L13.5 21 H3.5 Q2 21 2.3 19 L4.5 6 Q5.5 1.3 8 1.3Z" fill="none" stroke="#8a8a8a" stroke-width="1.2" stroke-linejoin="round"/><path d="M20.5 8.3 H30.5 Q32.8 8.5 32.5 11 L30.2 23 Q29 28.7 25.5 28.7 H9.5 L20.5 8.3Z" fill="none" stroke="#8a8a8a" stroke-width="1.2" stroke-linejoin="round"/></svg>
<div class="t" style="left:1816.5px;width:60px;text-align:center;top:72.7px;font-size:13px;color:#8a8a8a;">Copilot</div>
<svg class="a" style="left:1841.5px;top:89px;" width="10" height="8" viewBox="0 0 10 8"><path d="M1.7999999999999998 2.4 L5 5.6 L8.2 2.4" fill="none" stroke="#6a6a6a" stroke-width="1.5"/></svg>
<svg class="a" style="left:1888px;top:111px;" width="14" height="9" viewBox="0 0 14 9"><path d="M1.5 1.5 L7 7 L12.5 1.5" fill="none" stroke="#e0e0e0" stroke-width="1.4"/></svg>
<div style="position:absolute;left:1779px;top:1px;width:54px;height:24px;border:1px solid #6a6a6a;border-radius:4px;background:#141414"></div>
<svg class="a" style="left:1785px;top:7px;" width="14" height="13" viewBox="0 0 14 13"><path d="M1.5 1.5H12.5V8.5H6L3 11.5V8.5H1.5Z" fill="none" stroke="#e6e6e6" stroke-width="1.2"/></svg>
<div class="t" style="left:1801px;top:7.1px;font-size:13px;color:#f0f0f0;letter-spacing:-0.6px;word-spacing:2px;">메모</div>
<div style="position:absolute;left:1841px;top:1px;width:64px;height:24px;background:#3aa659;border-radius:4px"></div>
<svg class="a" style="left:1845px;top:6px;" width="14" height="14" viewBox="0 0 14 14"><path d="M1.5 5V12.5H12.5V9" fill="none" stroke="#101010" stroke-width="1.2"/><path d="M4 10 Q5 5 11 5 M8.5 2.5 L11 5 L8.5 7.5" fill="none" stroke="#101010" stroke-width="1.2"/></svg>
<div class="t" style="left:1862px;top:7.1px;font-size:13px;color:#101010;letter-spacing:-0.6px;word-spacing:2px;">공유</div>
<svg class="a" style="left:1892px;top:9px;" width="10" height="8" viewBox="0 0 10 8"><path d="M1.7999999999999998 2.4 L5 5.6 L8.2 2.4" fill="none" stroke="#101010" stroke-width="1.5"/></svg>
<div style="position:absolute;left:5px;top:137px;width:245px;height:28px;background:#292929;border:1px solid #666;border-radius:4px"></div>
<div style="position:absolute;left:270px;top:137px;width:86px;height:28px;background:#292929;border:1px solid #5a5a5a;border-radius:4px"></div>
<div style="position:absolute;left:360px;top:137px;width:1549px;height:28px;background:#292929;border:1px solid #666;border-radius:4px"></div>
<div class="t" style="left:12px;top:144px;font-size:15px;color:#f0f0f0">O12</div>
<svg class="a" style="left:233px;top:148px;" width="10" height="8" viewBox="0 0 10 8"><path d="M0.5 1.75 L5 6.25 L9.5 1.75" fill="none" stroke="#d8d8d8" stroke-width="1.5"/></svg>
<div style="position:absolute;left:259px;top:144px;width:2px;height:2px;background:#d8d8d8"></div>
<div style="position:absolute;left:259px;top:150px;width:2px;height:2px;background:#d8d8d8"></div>
<div style="position:absolute;left:259px;top:156px;width:2px;height:2px;background:#d8d8d8"></div>
<svg class="a" style="left:276px;top:144px;" width="14" height="14" viewBox="0 0 14 14"><path d="M1 1L13 13M13 1L1 13" stroke="#8a8a8a" stroke-width="1.2"/></svg>
<svg class="a" style="left:298px;top:144px;" width="16" height="12" viewBox="0 0 16 12"><path d="M1 6L5.5 11L15 1" fill="none" stroke="#8a8a8a" stroke-width="1.2"/></svg>
<div class="t" style="left:325px;top:143px;font-size:15px;color:#e0e0e0;font-family:'Liberation Serif',serif;font-style:italic">fx</div>
<svg class="a" style="left:343px;top:148px;" width="10" height="8" viewBox="0 0 10 8"><path d="M1.5 2.25 L5 5.75 L8.5 2.25" fill="none" stroke="#d8d8d8" stroke-width="1.5"/></svg>
<svg class="a" style="left:1894px;top:145px;" width="10" height="8" viewBox="0 0 10 8"><path d="M0.5 1.75 L5 6.25 L9.5 1.75" fill="none" stroke="#d8d8d8" stroke-width="1.5"/></svg>
<div class="t" style="left:372px;top:145px;font-size:13.5px;color:#f0f0f0">=LET(</div>
<div style="position:absolute;left:0px;top:172px;width:1895px;height:15px;background:#0d0d0d"></div>
<div style="position:absolute;left:0px;top:187px;width:22px;height:749px;background:#0d0d0d"></div>
<div style="position:absolute;left:22px;top:187px;width:1873px;height:749px;background:#fff"></div>
<div style="position:absolute;left:22px;top:187px;width:1px;height:749px;background:#dadada"></div>
<div style="position:absolute;left:34px;top:187px;width:1px;height:749px;background:#dadada"></div>
<div style="position:absolute;left:38px;top:187px;width:1px;height:749px;background:#dadada"></div>
<div style="position:absolute;left:74px;top:187px;width:1px;height:749px;background:#dadada"></div>
<div style="position:absolute;left:144px;top:187px;width:1px;height:749px;background:#dadada"></div>
<div style="position:absolute;left:246px;top:187px;width:1px;height:749px;background:#dadada"></div>
<div style="position:absolute;left:284px;top:187px;width:1px;height:749px;background:#dadada"></div>
<div style="position:absolute;left:421px;top:187px;width:1px;height:749px;background:#dadada"></div>
<div style="position:absolute;left:482px;top:187px;width:1px;height:749px;background:#dadada"></div>
<div style="position:absolute;left:574px;top:187px;width:1px;height:749px;background:#dadada"></div>
<div style="position:absolute;left:677px;top:187px;width:1px;height:749px;background:#dadada"></div>
<div style="position:absolute;left:730px;top:187px;width:1px;height:749px;background:#dadada"></div>
<div style="position:absolute;left:820px;top:187px;width:1px;height:749px;background:#dadada"></div>
<div style="position:absolute;left:921px;top:187px;width:1px;height:749px;background:#dadada"></div>
<div style="position:absolute;left:1024px;top:187px;width:1px;height:749px;background:#dadada"></div>
<div style="position:absolute;left:1122px;top:187px;width:1px;height:749px;background:#dadada"></div>
<div style="position:absolute;left:1245px;top:187px;width:1px;height:749px;background:#dadada"></div>
<div style="position:absolute;left:1300px;top:187px;width:1px;height:749px;background:#dadada"></div>
<div style="position:absolute;left:1443px;top:187px;width:1px;height:749px;background:#dadada"></div>
<div style="position:absolute;left:1535px;top:187px;width:1px;height:749px;background:#dadada"></div>
<div style="position:absolute;left:1626px;top:187px;width:1px;height:749px;background:#dadada"></div>
<div style="position:absolute;left:1729px;top:187px;width:1px;height:749px;background:#dadada"></div>
<div style="position:absolute;left:1791px;top:187px;width:1px;height:749px;background:#dadada"></div>
<div style="position:absolute;left:1851px;top:187px;width:1px;height:749px;background:#dadada"></div>
<div style="position:absolute;left:22px;top:198px;width:1873px;height:1px;background:#dadada"></div>
<div style="position:absolute;left:22px;top:232px;width:1873px;height:1px;background:#dadada"></div>
<div style="position:absolute;left:22px;top:260px;width:1873px;height:1px;background:#dadada"></div>
<div style="position:absolute;left:22px;top:288px;width:1873px;height:1px;background:#dadada"></div>
<div style="position:absolute;left:22px;top:316px;width:1873px;height:1px;background:#dadada"></div>
<div style="position:absolute;left:22px;top:344px;width:1873px;height:1px;background:#dadada"></div>
<div style="position:absolute;left:22px;top:372px;width:1873px;height:1px;background:#dadada"></div>
<div style="position:absolute;left:22px;top:400px;width:1873px;height:1px;background:#dadada"></div>
<div style="position:absolute;left:22px;top:428px;width:1873px;height:1px;background:#dadada"></div>
<div style="position:absolute;left:22px;top:456px;width:1873px;height:1px;background:#dadada"></div>
<div style="position:absolute;left:22px;top:484px;width:1873px;height:1px;background:#dadada"></div>
<div style="position:absolute;left:22px;top:512px;width:1873px;height:1px;background:#dadada"></div>
<div style="position:absolute;left:22px;top:540px;width:1873px;height:1px;background:#dadada"></div>
<div style="position:absolute;left:22px;top:568px;width:1873px;height:1px;background:#dadada"></div>
<div style="position:absolute;left:22px;top:596px;width:1873px;height:1px;background:#dadada"></div>
<div style="position:absolute;left:22px;top:624px;width:1873px;height:1px;background:#dadada"></div>
<div style="position:absolute;left:22px;top:652px;width:1873px;height:1px;background:#dadada"></div>
<div style="position:absolute;left:22px;top:680px;width:1873px;height:1px;background:#dadada"></div>
<div style="position:absolute;left:22px;top:708px;width:1873px;height:1px;background:#dadada"></div>
<div style="position:absolute;left:22px;top:736px;width:1873px;height:1px;background:#dadada"></div>
<div style="position:absolute;left:22px;top:764px;width:1873px;height:1px;background:#dadada"></div>
<div style="position:absolute;left:22px;top:792px;width:1873px;height:1px;background:#dadada"></div>
<div style="position:absolute;left:22px;top:820px;width:1873px;height:1px;background:#dadada"></div>
<div style="position:absolute;left:22px;top:848px;width:1873px;height:1px;background:#dadada"></div>
<div style="position:absolute;left:22px;top:876px;width:1873px;height:1px;background:#dadada"></div>
<div style="position:absolute;left:22px;top:904px;width:1873px;height:1px;background:#dadada"></div>
<div style="position:absolute;left:22px;top:932px;width:1873px;height:1px;background:#dadada"></div>
<div style="position:absolute;left:10px;top:190px;width:1px;height:5px;background:#bdbdbd"></div>
<div style="position:absolute;left:0px;top:198px;width:22px;height:1px;background:#4d4d4d"></div>
<div class="rh" style="top:198px;height:34px">2</div>
<div style="position:absolute;left:0px;top:232px;width:22px;height:1px;background:#4d4d4d"></div>
<div class="rh" style="top:232px;height:28px">3</div>
<div style="position:absolute;left:0px;top:260px;width:22px;height:1px;background:#4d4d4d"></div>
<div class="rh" style="top:260px;height:28px">4</div>
<div style="position:absolute;left:0px;top:288px;width:22px;height:1px;background:#4d4d4d"></div>
<div class="rh" style="top:288px;height:28px">5</div>
<div style="position:absolute;left:0px;top:316px;width:22px;height:1px;background:#4d4d4d"></div>
<div class="rh" style="top:316px;height:28px">6</div>
<div style="position:absolute;left:0px;top:344px;width:22px;height:1px;background:#4d4d4d"></div>
<div class="rh" style="top:344px;height:28px">7</div>
<div style="position:absolute;left:0px;top:372px;width:22px;height:1px;background:#4d4d4d"></div>
<div class="rh" style="top:372px;height:28px">8</div>
<div style="position:absolute;left:0px;top:400px;width:22px;height:1px;background:#4d4d4d"></div>
<div class="rh" style="top:400px;height:28px">9</div>
<div style="position:absolute;left:0px;top:428px;width:22px;height:1px;background:#4d4d4d"></div>
<div class="rh" style="top:428px;height:28px">10</div>
<div style="position:absolute;left:0px;top:456px;width:22px;height:1px;background:#4d4d4d"></div>
<div class="rh" style="top:456px;height:28px">11</div>
<div style="position:absolute;left:0px;top:484px;width:22px;height:1px;background:#4d4d4d"></div>
<div class="rh" style="top:484px;height:28px">12</div>
<div style="position:absolute;left:0px;top:512px;width:22px;height:1px;background:#4d4d4d"></div>
<div class="rh" style="top:512px;height:28px">13</div>
<div style="position:absolute;left:0px;top:540px;width:22px;height:1px;background:#4d4d4d"></div>
<div class="rh" style="top:540px;height:28px">14</div>
<div style="position:absolute;left:0px;top:568px;width:22px;height:1px;background:#4d4d4d"></div>
<div class="rh" style="top:568px;height:28px">15</div>
<div style="position:absolute;left:0px;top:596px;width:22px;height:1px;background:#4d4d4d"></div>
<div class="rh" style="top:596px;height:28px">16</div>
<div style="position:absolute;left:0px;top:624px;width:22px;height:1px;background:#4d4d4d"></div>
<div class="rh" style="top:624px;height:28px">17</div>
<div style="position:absolute;left:0px;top:652px;width:22px;height:1px;background:#4d4d4d"></div>
<div class="rh" style="top:652px;height:28px">18</div>
<div style="position:absolute;left:0px;top:680px;width:22px;height:1px;background:#4d4d4d"></div>
<div class="rh" style="top:680px;height:28px">19</div>
<div style="position:absolute;left:0px;top:708px;width:22px;height:1px;background:#4d4d4d"></div>
<div class="rh" style="top:708px;height:28px">20</div>
<div style="position:absolute;left:0px;top:736px;width:22px;height:1px;background:#4d4d4d"></div>
<div class="rh" style="top:736px;height:28px">21</div>
<div style="position:absolute;left:0px;top:764px;width:22px;height:1px;background:#4d4d4d"></div>
<div class="rh" style="top:764px;height:28px">22</div>
<div style="position:absolute;left:0px;top:792px;width:22px;height:1px;background:#4d4d4d"></div>
<div class="rh" style="top:792px;height:28px">23</div>
<div style="position:absolute;left:0px;top:820px;width:22px;height:1px;background:#4d4d4d"></div>
<div class="rh" style="top:820px;height:28px">24</div>
<div style="position:absolute;left:0px;top:848px;width:22px;height:1px;background:#4d4d4d"></div>
<div class="rh" style="top:848px;height:28px">25</div>
<div style="position:absolute;left:0px;top:876px;width:22px;height:1px;background:#4d4d4d"></div>
<div class="rh" style="top:876px;height:28px">26</div>
<div style="position:absolute;left:0px;top:904px;width:22px;height:1px;background:#4d4d4d"></div>
<div class="rh" style="top:904px;height:28px">27</div>
<div style="position:absolute;left:0px;top:932px;width:22px;height:1px;background:#4d4d4d"></div>
<div style="position:absolute;left:0px;top:187px;width:22px;height:1px;background:#5a5a5a"></div>
<div style="position:absolute;left:11px;top:176px;width:0px;height:0px;border-left:8px solid transparent;border-bottom:8px solid #6b6b6b"></div>
<div style="position:absolute;left:22px;top:172px;width:1px;height:15px;background:#5a5a5a"></div>
<div class="ch" style="left:22px;width:12px">A</div>
<div style="position:absolute;left:34px;top:172px;width:1px;height:15px;background:#5a5a5a"></div>
<div style="position:absolute;left:38px;top:172px;width:1px;height:15px;background:#5a5a5a"></div>
<div class="ch" style="left:38px;width:36px">D</div>
<div style="position:absolute;left:74px;top:172px;width:1px;height:15px;background:#5a5a5a"></div>
<div class="ch" style="left:74px;width:70px">E</div>
<div style="position:absolute;left:144px;top:172px;width:1px;height:15px;background:#5a5a5a"></div>
<div class="ch" style="left:144px;width:102px">F</div>
<div style="position:absolute;left:246px;top:172px;width:1px;height:15px;background:#5a5a5a"></div>
<div class="ch" style="left:246px;width:38px">G</div>
<div style="position:absolute;left:284px;top:172px;width:1px;height:15px;background:#5a5a5a"></div>
<div class="ch" style="left:284px;width:137px">H</div>
<div style="position:absolute;left:421px;top:172px;width:1px;height:15px;background:#5a5a5a"></div>
<div class="ch" style="left:421px;width:61px">I</div>
<div style="position:absolute;left:482px;top:172px;width:1px;height:15px;background:#5a5a5a"></div>
<div class="ch" style="left:482px;width:92px">J</div>
<div style="position:absolute;left:574px;top:172px;width:1px;height:15px;background:#5a5a5a"></div>
<div class="ch" style="left:574px;width:103px">K</div>
<div style="position:absolute;left:677px;top:172px;width:1px;height:15px;background:#5a5a5a"></div>
<div class="ch" style="left:677px;width:53px">L</div>
<div style="position:absolute;left:730px;top:172px;width:1px;height:15px;background:#5a5a5a"></div>
<div class="ch" style="left:730px;width:90px">M</div>
<div style="position:absolute;left:820px;top:172px;width:1px;height:15px;background:#5a5a5a"></div>
<div class="ch" style="left:820px;width:101px">N</div>
<div style="position:absolute;left:921px;top:172px;width:1px;height:15px;background:#5a5a5a"></div>
<div class="ch" style="left:921px;width:103px">O</div>
<div style="position:absolute;left:1024px;top:172px;width:1px;height:15px;background:#5a5a5a"></div>
<div class="ch" style="left:1024px;width:98px">P</div>
<div style="position:absolute;left:1122px;top:172px;width:1px;height:15px;background:#5a5a5a"></div>
<div class="ch" style="left:1122px;width:123px">Q</div>
<div style="position:absolute;left:1245px;top:172px;width:1px;height:15px;background:#5a5a5a"></div>
<div class="ch" style="left:1245px;width:55px">R</div>
<div style="position:absolute;left:1300px;top:172px;width:1px;height:15px;background:#5a5a5a"></div>
<div class="ch" style="left:1300px;width:143px">S</div>
<div style="position:absolute;left:1443px;top:172px;width:1px;height:15px;background:#5a5a5a"></div>
<div class="ch" style="left:1446px;width:89px">AB</div>
<div style="position:absolute;left:1535px;top:172px;width:1px;height:15px;background:#5a5a5a"></div>
<div class="ch" style="left:1535px;width:91px">AC</div>
<div style="position:absolute;left:1626px;top:172px;width:1px;height:15px;background:#5a5a5a"></div>
<div class="ch" style="left:1626px;width:103px">AD</div>
<div style="position:absolute;left:1729px;top:172px;width:1px;height:15px;background:#5a5a5a"></div>
<div class="ch" style="left:1729px;width:62px">AE</div>
<div style="position:absolute;left:1791px;top:172px;width:1px;height:15px;background:#5a5a5a"></div>
<div class="ch" style="left:1791px;width:60px">AF</div>
<div style="position:absolute;left:1851px;top:172px;width:1px;height:15px;background:#5a5a5a"></div>
<div class="ch" style="left:1851px;width:44px;justify-content:flex-end;padding-right:4px">AG</div>
<div style="position:absolute;left:1912px;top:172px;width:1px;height:15px;background:#5a5a5a"></div>
<div style="position:absolute;left:1446px;top:172px;width:1px;height:15px;background:#5a5a5a"></div>
<div style="position:absolute;left:0px;top:187px;width:1895px;height:1px;background:#5a5a5a"></div>
<div class="cell cc" style="left:38px;top:188px;width:36px;height:10px;font-size:9px;color:#222;padding-top:1px">5</div>
<div class="cell cc" style="left:74px;top:188px;width:70px;height:10px;font-size:9px;color:#222;padding-top:1px">9.5</div>
<div class="cell cc" style="left:144px;top:188px;width:102px;height:10px;font-size:9px;color:#222;padding-top:1px">14.5</div>
<div class="cell cc" style="left:421px;top:188px;width:61px;height:10px;font-size:9px;color:#222;padding-top:1px">8.38</div>
<div class="cell cc" style="left:574px;top:188px;width:103px;height:10px;font-size:9px;color:#222;padding-top:1px">14.5</div>
<div style="position:absolute;left:730px;top:232px;width:713px;height:28px;background:#c0e4f5"></div>
<div style="position:absolute;left:730px;top:288px;width:713px;height:28px;background:#c0e4f5"></div>
<div style="position:absolute;left:730px;top:344px;width:713px;height:28px;background:#c0e4f5"></div>
<div style="position:absolute;left:730px;top:400px;width:713px;height:28px;background:#c0e4f5"></div>
<div style="position:absolute;left:730px;top:456px;width:713px;height:28px;background:#c0e4f5"></div>
<div style="position:absolute;left:730px;top:512px;width:713px;height:28px;background:#c0e4f5"></div>
<div style="position:absolute;left:730px;top:568px;width:713px;height:28px;background:#c0e4f5"></div>
<div style="position:absolute;left:730px;top:624px;width:713px;height:28px;background:#c0e4f5"></div>
<div style="position:absolute;left:730px;top:680px;width:713px;height:28px;background:#c0e4f5"></div>
<div style="position:absolute;left:730px;top:736px;width:713px;height:28px;background:#c0e4f5"></div>
<div style="position:absolute;left:730px;top:792px;width:713px;height:28px;background:#c0e4f5"></div>
<div style="position:absolute;left:730px;top:848px;width:713px;height:28px;background:#c0e4f5"></div>
<div style="position:absolute;left:730px;top:904px;width:713px;height:28px;background:#c0e4f5"></div>
<div style="position:absolute;left:730px;top:260px;width:713px;height:1px;background:#45b0e1"></div>
<div style="position:absolute;left:730px;top:288px;width:713px;height:1px;background:#45b0e1"></div>
<div style="position:absolute;left:730px;top:316px;width:713px;height:1px;background:#45b0e1"></div>
<div style="position:absolute;left:730px;top:344px;width:713px;height:1px;background:#45b0e1"></div>
<div style="position:absolute;left:730px;top:372px;width:713px;height:1px;background:#45b0e1"></div>
<div style="position:absolute;left:730px;top:400px;width:713px;height:1px;background:#45b0e1"></div>
<div style="position:absolute;left:730px;top:428px;width:713px;height:1px;background:#45b0e1"></div>
<div style="position:absolute;left:730px;top:456px;width:713px;height:1px;background:#45b0e1"></div>
<div style="position:absolute;left:730px;top:484px;width:713px;height:1px;background:#45b0e1"></div>
<div style="position:absolute;left:730px;top:512px;width:713px;height:1px;background:#45b0e1"></div>
<div style="position:absolute;left:730px;top:540px;width:713px;height:1px;background:#45b0e1"></div>
<div style="position:absolute;left:730px;top:568px;width:713px;height:1px;background:#45b0e1"></div>
<div style="position:absolute;left:730px;top:596px;width:713px;height:1px;background:#45b0e1"></div>
<div style="position:absolute;left:730px;top:624px;width:713px;height:1px;background:#45b0e1"></div>
<div style="position:absolute;left:730px;top:652px;width:713px;height:1px;background:#45b0e1"></div>
<div style="position:absolute;left:730px;top:680px;width:713px;height:1px;background:#45b0e1"></div>
<div style="position:absolute;left:730px;top:708px;width:713px;height:1px;background:#45b0e1"></div>
<div style="position:absolute;left:730px;top:736px;width:713px;height:1px;background:#45b0e1"></div>
<div style="position:absolute;left:730px;top:764px;width:713px;height:1px;background:#45b0e1"></div>
<div style="position:absolute;left:730px;top:792px;width:713px;height:1px;background:#45b0e1"></div>
<div style="position:absolute;left:730px;top:820px;width:713px;height:1px;background:#45b0e1"></div>
<div style="position:absolute;left:730px;top:848px;width:713px;height:1px;background:#45b0e1"></div>
<div style="position:absolute;left:730px;top:876px;width:713px;height:1px;background:#45b0e1"></div>
<div style="position:absolute;left:730px;top:904px;width:713px;height:1px;background:#45b0e1"></div>
<div style="position:absolute;left:730px;top:932px;width:713px;height:1px;background:#45b0e1"></div>
<div style="position:absolute;left:574px;top:372px;width:103px;height:140px;background:#ffff00"></div>
<div style="position:absolute;left:1443px;top:652px;width:1px;height:56px;background:#45b0e1"></div>
<div style="position:absolute;left:1446px;top:232px;width:283px;height:308px;background:#ffff00"></div>
<div style="position:absolute;left:38px;top:260px;width:693px;height:1px;background:repeating-linear-gradient(to right,#000 0 1px,transparent 1px 2px)"></div>
<div style="position:absolute;left:38px;top:288px;width:693px;height:1px;background:repeating-linear-gradient(to right,#000 0 1px,transparent 1px 2px)"></div>
<div style="position:absolute;left:38px;top:316px;width:693px;height:1px;background:repeating-linear-gradient(to right,#000 0 1px,transparent 1px 2px)"></div>
<div style="position:absolute;left:38px;top:344px;width:693px;height:1px;background:repeating-linear-gradient(to right,#000 0 1px,transparent 1px 2px)"></div>
<div style="position:absolute;left:38px;top:372px;width:693px;height:1px;background:repeating-linear-gradient(to right,#000 0 1px,transparent 1px 2px)"></div>
<div style="position:absolute;left:38px;top:400px;width:693px;height:1px;background:repeating-linear-gradient(to right,#000 0 1px,transparent 1px 2px)"></div>
<div style="position:absolute;left:38px;top:428px;width:693px;height:1px;background:repeating-linear-gradient(to right,#000 0 1px,transparent 1px 2px)"></div>
<div style="position:absolute;left:38px;top:456px;width:693px;height:1px;background:repeating-linear-gradient(to right,#000 0 1px,transparent 1px 2px)"></div>
<div style="position:absolute;left:38px;top:484px;width:693px;height:1px;background:repeating-linear-gradient(to right,#000 0 1px,transparent 1px 2px)"></div>
<div style="position:absolute;left:38px;top:512px;width:693px;height:1px;background:repeating-linear-gradient(to right,#000 0 1px,transparent 1px 2px)"></div>
<div style="position:absolute;left:38px;top:540px;width:693px;height:1px;background:repeating-linear-gradient(to right,#000 0 1px,transparent 1px 2px)"></div>
<div style="position:absolute;left:38px;top:568px;width:693px;height:1px;background:repeating-linear-gradient(to right,#000 0 1px,transparent 1px 2px)"></div>
<div style="position:absolute;left:38px;top:596px;width:693px;height:1px;background:repeating-linear-gradient(to right,#000 0 1px,transparent 1px 2px)"></div>
<div style="position:absolute;left:38px;top:624px;width:693px;height:1px;background:repeating-linear-gradient(to right,#000 0 1px,transparent 1px 2px)"></div>
<div style="position:absolute;left:38px;top:652px;width:693px;height:1px;background:repeating-linear-gradient(to right,#000 0 1px,transparent 1px 2px)"></div>
<div style="position:absolute;left:38px;top:680px;width:693px;height:1px;background:repeating-linear-gradient(to right,#000 0 1px,transparent 1px 2px)"></div>
<div style="position:absolute;left:38px;top:708px;width:693px;height:1px;background:repeating-linear-gradient(to right,#000 0 1px,transparent 1px 2px)"></div>
<div style="position:absolute;left:38px;top:736px;width:693px;height:1px;background:repeating-linear-gradient(to right,#000 0 1px,transparent 1px 2px)"></div>
<div style="position:absolute;left:38px;top:764px;width:693px;height:1px;background:repeating-linear-gradient(to right,#000 0 1px,transparent 1px 2px)"></div>
<div style="position:absolute;left:38px;top:792px;width:693px;height:1px;background:repeating-linear-gradient(to right,#000 0 1px,transparent 1px 2px)"></div>
<div style="position:absolute;left:38px;top:820px;width:693px;height:1px;background:repeating-linear-gradient(to right,#000 0 1px,transparent 1px 2px)"></div>
<div style="position:absolute;left:38px;top:848px;width:693px;height:1px;background:repeating-linear-gradient(to right,#000 0 1px,transparent 1px 2px)"></div>
<div style="position:absolute;left:38px;top:876px;width:693px;height:1px;background:repeating-linear-gradient(to right,#000 0 1px,transparent 1px 2px)"></div>
<div style="position:absolute;left:38px;top:904px;width:693px;height:1px;background:repeating-linear-gradient(to right,#000 0 1px,transparent 1px 2px)"></div>
<div style="position:absolute;left:38px;top:932px;width:693px;height:1px;background:repeating-linear-gradient(to right,#000 0 1px,transparent 1px 2px)"></div>
<div style="position:absolute;left:74px;top:232px;width:1px;height:704px;background:repeating-linear-gradient(to bottom,#000 0 1px,transparent 1px 2px)"></div>
<div style="position:absolute;left:143px;top:232px;width:1px;height:704px;background:repeating-linear-gradient(to bottom,#000 0 1px,transparent 1px 2px)"></div>
<div style="position:absolute;left:246px;top:232px;width:1px;height:704px;background:repeating-linear-gradient(to bottom,#000 0 1px,transparent 1px 2px)"></div>
<div style="position:absolute;left:421px;top:232px;width:1px;height:704px;background:repeating-linear-gradient(to bottom,#000 0 1px,transparent 1px 2px)"></div>
<div style="position:absolute;left:482px;top:232px;width:1px;height:704px;background:repeating-linear-gradient(to bottom,#000 0 1px,transparent 1px 2px)"></div>
<div style="position:absolute;left:574px;top:232px;width:1px;height:704px;background:repeating-linear-gradient(to bottom,#000 0 1px,transparent 1px 2px)"></div>
<div style="position:absolute;left:677px;top:232px;width:1px;height:704px;background:repeating-linear-gradient(to bottom,#000 0 1px,transparent 1px 2px)"></div>
<div style="position:absolute;left:729px;top:232px;width:1px;height:704px;background:repeating-linear-gradient(to bottom,#000 0 1px,transparent 1px 2px)"></div>
<div style="position:absolute;left:37px;top:232px;width:1px;height:28px;background:repeating-linear-gradient(to bottom,#000 0 1px,transparent 1px 2px)"></div>
<div style="position:absolute;left:37px;top:260px;width:1px;height:676px;background:#2a6b98"></div>
<div style="position:absolute;left:38px;top:198px;width:692px;height:34px;background:#000"></div>
<div style="position:absolute;left:730px;top:198px;width:294px;height:34px;background:#e97132"></div>
<div style="position:absolute;left:1024px;top:198px;width:419px;height:34px;background:#156082"></div>
<div style="position:absolute;left:37px;top:198px;width:693px;height:1px;background:#0f5a80"></div>
<div style="position:absolute;left:730px;top:198px;width:713px;height:1px;background:#45b0e1"></div>
<div style="position:absolute;left:37px;top:198px;width:1px;height:34px;background:#0f5a80"></div>
<div style="position:absolute;left:482px;top:199px;width:1px;height:33px;background:repeating-linear-gradient(to bottom,#fff 0 1px,transparent 1px 2px)"></div>
<div style="position:absolute;left:574px;top:199px;width:1px;height:33px;background:repeating-linear-gradient(to bottom,#fff 0 1px,transparent 1px 2px)"></div>
<div style="position:absolute;left:677px;top:199px;width:1px;height:33px;background:repeating-linear-gradient(to bottom,#fff 0 1px,transparent 1px 2px)"></div>
<div style="position:absolute;left:729px;top:199px;width:1px;height:33px;background:repeating-linear-gradient(to bottom,#fff 0 1px,transparent 1px 2px)"></div>
<div style="position:absolute;left:1445px;top:198px;width:284px;height:34px;background:#595959"></div>
<div class="hd" style="left:38px;top:199px;width:36px;height:33px;">No</div>
<div class="hd" style="left:74px;top:199px;width:70px;height:33px;">출고일자</div>
<div class="hd" style="left:144px;top:199px;width:102px;height:33px;">업체명</div>
<div class="hd" style="left:246px;top:199px;width:38px;height:33px;">규격</div>
<div class="hd" style="left:284px;top:199px;width:137px;height:33px;">규격2</div>
<div class="hd" style="left:421px;top:199px;width:61px;height:33px;">수량</div>
<div class="hd" style="left:482px;top:199px;width:92px;height:33px;">차량번호</div>
<div class="hd" style="left:730px;top:199px;width:90px;height:33px;font-weight:normal;letter-spacing:-0.5px;">거리당배송비</div>
<div class="hd" style="left:820px;top:199px;width:101px;height:33px;font-weight:normal;letter-spacing:-0.5px;">수량별배송비</div>
<div class="hd" style="left:921px;top:199px;width:103px;height:33px;font-weight:normal;letter-spacing:-0.5px;">총수량별배송비</div>
<div class="hd" style="left:1024px;top:199px;width:98px;height:33px;">배송비채움</div>
<div class="hd" style="left:1122px;top:199px;width:123px;height:33px;">배송키</div>
<div class="hd" style="left:1245px;top:199px;width:55px;height:33px;">업체키</div>
<div class="hd" style="left:1300px;top:199px;width:143px;height:33px;">업체배송키</div>
<div class="hd" style="left:1446px;top:199px;width:89px;height:33px;">거리당배송비</div>
<div class="hd" style="left:1535px;top:199px;width:91px;height:33px;">수량별배송비</div>
<div class="hd" style="left:1626px;top:199px;width:103px;height:33px;">총수량별배송비</div>
<div class="hd" style="left:574px;top:199px;width:103px;height:15px">배송비</div>
<div class="hd" style="left:574px;top:220px;width:103px;height:13px;align-items:flex-start">(vat제외)</div>
<div class="hd" style="left:677px;top:199px;width:53px;height:15px">거리</div>
<div class="hd" style="left:677px;top:220px;width:53px;height:13px;align-items:flex-start">(km)</div>
<div class="fb" style="left:57px;top:214px"></div>
<div class="fb" style="left:126px;top:214px;background:linear-gradient(#fafbfc,#eef0f3)"></div>
<div style="position:absolute;left:126px;top:214px;width:17px;height:17px;background:linear-gradient(#fafbfc,#eef0f3);border:1px solid #c9cdd3"></div>
<svg class="a" style="left:126px;top:214px;" width="17" height="17" viewBox="0 0 17 17"><path d="M3.5 10 L7.5 10 L5.5 12.5Z" fill="#6b6b6b"/><path d="M11.5 13V4M9.5 6L11.5 4L13.5 6" fill="none" stroke="#6b6b6b" stroke-width="1"/></svg>
<div class="fb" style="left:229px;top:214px"></div>
<div class="fb" style="left:267px;top:214px"></div>
<div class="fb" style="left:404px;top:214px"></div>
<div class="fb" style="left:465px;top:214px"></div>
<div class="fb" style="left:557px;top:214px"></div>
<div class="fb" style="left:660px;top:214px"></div>
<div class="fb" style="left:712px;top:214px"></div>
<div class="fb" style="left:803px;top:214px"></div>
<div class="fb" style="left:904px;top:214px"></div>
<div class="fb" style="left:1007px;top:214px"></div>
<div class="fb" style="left:1104px;top:214px"></div>
<div class="fb" style="left:1228px;top:214px"></div>
<div class="fb" style="left:1283px;top:214px"></div>
<div class="fb" style="left:1426px;top:214px"></div>
<div style="position:absolute;left:1443px;top:197px;width:287px;height:344px;border:2px solid #7f3300"></div>
<div style="position:absolute;left:246px;top:172px;width:1px;height:764px;background:#a6a6a6"></div>
<div style="position:absolute;left:0px;top:232px;width:1895px;height:1px;background:#a6a6a6"></div>
<div class="cell cc" style="left:38px;top:232px;width:36px;height:28px">1</div>
<div class="cell cc" style="left:74px;top:232px;width:70px;height:28px">24-07-29</div>
<div class="cell cc" style="left:144px;top:232px;width:102px;height:28px">아스</div>
<div class="cell cc" style="left:246px;top:232px;width:38px;height:28px">하</div>
<div class="cell cc" style="left:284px;top:232px;width:137px;height:28px">L큐빅</div>
<div class="cell cc" style="left:421px;top:232px;width:61px;height:28px">460</div>
<div class="cell cc" style="left:482px;top:232px;width:92px;height:28px">*****</div>
<div class="cell cc" style="left:574px;top:232px;width:103px;height:28px">0</div>
<div class="cell cc" style="left:677px;top:232px;width:53px;height:28px">10</div>
<div class="cell cr" style="left:730px;top:232px;width:90px;height:28px;padding-right:2px">0</div>
<div class="cell cr" style="left:820px;top:232px;width:101px;height:28px;padding-right:2px">0</div>
<div class="cell cr" style="left:921px;top:232px;width:103px;height:28px;padding-right:2px">0</div>
<div class="cell cr" style="left:1024px;top:232px;width:98px;height:28px;padding-right:2px">0</div>
<div class="cell cc" style="left:1122px;top:232px;width:123px;height:28px">24-07-29|0</div>
<div class="cell cc" style="left:1245px;top:232px;width:55px;height:28px">아스</div>
<div class="cell cc" style="left:1300px;top:232px;width:143px;height:28px">24-07-29|0|아스</div>
<div class="cell cr" style="left:1446px;top:232px;width:89px;height:28px;padding-right:8px">-</div>
<div class="cell cr" style="left:1535px;top:232px;width:91px;height:28px;padding-right:8px">-</div>
<div class="cell cr" style="left:1626px;top:232px;width:103px;height:28px;padding-right:8px">-</div>
<div class="cell cc" style="left:38px;top:260px;width:36px;height:28px">2</div>
<div class="cell cc" style="left:74px;top:260px;width:70px;height:28px">24-07-29</div>
<div class="cell cc" style="left:144px;top:260px;width:102px;height:28px">퍼톤</div>
<div class="cell cc" style="left:246px;top:260px;width:38px;height:28px">하</div>
<div class="cell cc" style="left:284px;top:260px;width:137px;height:28px">미르바</div>
<div class="cell cc" style="left:421px;top:260px;width:61px;height:28px">70</div>
<div class="cell cc" style="left:482px;top:260px;width:92px;height:28px">*****</div>
<div class="cell cc" style="left:574px;top:260px;width:103px;height:28px">0</div>
<div class="cell cc" style="left:677px;top:260px;width:53px;height:28px">15</div>
<div class="cell cr" style="left:730px;top:260px;width:90px;height:28px;padding-right:2px">0</div>
<div class="cell cr" style="left:820px;top:260px;width:101px;height:28px;padding-right:2px">0</div>
<div class="cell cr" style="left:921px;top:260px;width:103px;height:28px;padding-right:2px">0</div>
<div class="cell cr" style="left:1024px;top:260px;width:98px;height:28px;padding-right:2px">0</div>
<div class="cell cc" style="left:1122px;top:260px;width:123px;height:28px">24-07-29|0</div>
<div class="cell cc" style="left:1245px;top:260px;width:55px;height:28px">퍼톤</div>
<div class="cell cc" style="left:1300px;top:260px;width:143px;height:28px">24-07-29|0|퍼톤</div>
<div class="cell cr" style="left:1446px;top:260px;width:89px;height:28px;padding-right:8px">-</div>
<div class="cell cr" style="left:1535px;top:260px;width:91px;height:28px;padding-right:8px">-</div>
<div class="cell cr" style="left:1626px;top:260px;width:103px;height:28px;padding-right:8px">-</div>
<div class="cell cc" style="left:38px;top:288px;width:36px;height:28px">3</div>
<div class="cell cc" style="left:74px;top:288px;width:70px;height:28px">24-08-05</div>
<div class="cell cc" style="left:144px;top:288px;width:102px;height:28px">아스</div>
<div class="cell cc" style="left:246px;top:288px;width:38px;height:28px">하</div>
<div class="cell cc" style="left:284px;top:288px;width:137px;height:28px">L큐빅</div>
<div class="cell cc" style="left:421px;top:288px;width:61px;height:28px">469</div>
<div class="cell cc" style="left:482px;top:288px;width:92px;height:28px">*****</div>
<div class="cell cc" style="left:574px;top:288px;width:103px;height:28px">0</div>
<div class="cell cc" style="left:677px;top:288px;width:53px;height:28px">10</div>
<div class="cell cr" style="left:730px;top:288px;width:90px;height:28px;padding-right:2px">0</div>
<div class="cell cr" style="left:820px;top:288px;width:101px;height:28px;padding-right:2px">0</div>
<div class="cell cr" style="left:921px;top:288px;width:103px;height:28px;padding-right:2px">0</div>
<div class="cell cr" style="left:1024px;top:288px;width:98px;height:28px;padding-right:2px">0</div>
<div class="cell cc" style="left:1122px;top:288px;width:123px;height:28px">24-08-05|0</div>
<div class="cell cc" style="left:1245px;top:288px;width:55px;height:28px">아스</div>
<div class="cell cc" style="left:1300px;top:288px;width:143px;height:28px">24-08-05|0|아스</div>
<div class="cell cr" style="left:1446px;top:288px;width:89px;height:28px;padding-right:8px">-</div>
<div class="cell cr" style="left:1535px;top:288px;width:91px;height:28px;padding-right:8px">-</div>
<div class="cell cr" style="left:1626px;top:288px;width:103px;height:28px;padding-right:8px">-</div>
<div class="cell cc" style="left:38px;top:316px;width:36px;height:28px">4</div>
<div class="cell cc" style="left:74px;top:316px;width:70px;height:28px">25-01-02</div>
<div class="cell cc" style="left:144px;top:316px;width:102px;height:28px">퍼톤</div>
<div class="cell cc" style="left:246px;top:316px;width:38px;height:28px">유</div>
<div class="cell cc" style="left:284px;top:316px;width:137px;height:28px">아스탈</div>
<div class="cell cc" style="left:421px;top:316px;width:61px;height:28px">76</div>
<div class="cell cc" style="left:482px;top:316px;width:92px;height:28px">*****</div>
<div class="cell cc" style="left:574px;top:316px;width:103px;height:28px">200,000</div>
<div class="cell cc" style="left:677px;top:316px;width:53px;height:28px">15</div>
<div class="cell cr" style="left:730px;top:316px;width:90px;height:28px;padding-right:2px">13,333</div>
<div class="cell cr" style="left:820px;top:316px;width:101px;height:28px;padding-right:2px">2,632</div>
<div class="cell cr" style="left:921px;top:316px;width:103px;height:28px;padding-right:2px">200,000</div>
<div class="cell cr" style="left:1024px;top:316px;width:98px;height:28px;padding-right:2px">200,000</div>
<div class="cell cc" style="left:1122px;top:316px;width:123px;height:28px">25-01-02|200000</div>
<div class="cell cc" style="left:1245px;top:316px;width:55px;height:28px">퍼톤</div>
<div class="cell cc" style="left:1300px;top:316px;width:143px;height:28px">25-01-02|200000|퍼톤</div>
<div class="cell cr" style="left:1446px;top:316px;width:89px;height:28px;padding-right:8px">13,333</div>
<div class="cell cr" style="left:1535px;top:316px;width:91px;height:28px;padding-right:8px">2,632</div>
<div class="cell cr" style="left:1626px;top:316px;width:103px;height:28px;padding-right:8px">200,000</div>
<div class="cell cc" style="left:38px;top:344px;width:36px;height:28px">5</div>
<div class="cell cc" style="left:74px;top:344px;width:70px;height:28px">25-01-02</div>
<div class="cell cc" style="left:144px;top:344px;width:102px;height:28px">신크</div>
<div class="cell cc" style="left:246px;top:344px;width:38px;height:28px">유</div>
<div class="cell cc" style="left:284px;top:344px;width:137px;height:28px">스트랙</div>
<div class="cell cc" style="left:421px;top:344px;width:61px;height:28px">40</div>
<div class="cell cc" style="left:482px;top:344px;width:92px;height:28px">*****</div>
<div class="cell cc" style="left:574px;top:344px;width:103px;height:28px">70,000</div>
<div class="cell cc" style="left:677px;top:344px;width:53px;height:28px">145</div>
<div class="cell cr" style="left:730px;top:344px;width:90px;height:28px;padding-right:2px">483</div>
<div class="cell cr" style="left:820px;top:344px;width:101px;height:28px;padding-right:2px">1,750</div>
<div class="cell cr" style="left:921px;top:344px;width:103px;height:28px;padding-right:2px">70,000</div>
<div class="cell cr" style="left:1024px;top:344px;width:98px;height:28px;padding-right:2px">70,000</div>
<div class="cell cc" style="left:1122px;top:344px;width:123px;height:28px">25-01-02|70000</div>
<div class="cell cc" style="left:1245px;top:344px;width:55px;height:28px">신크</div>
<div class="cell cc" style="left:1300px;top:344px;width:143px;height:28px">25-01-02|70000|신크</div>
<div class="cell cr" style="left:1446px;top:344px;width:89px;height:28px;padding-right:8px">483</div>
<div class="cell cr" style="left:1535px;top:344px;width:91px;height:28px;padding-right:8px">1,750</div>
<div class="cell cr" style="left:1626px;top:344px;width:103px;height:28px;padding-right:8px">70,000</div>
<div class="cell cc" style="left:38px;top:372px;width:36px;height:28px">6</div>
<div class="cell cc" style="left:74px;top:372px;width:70px;height:28px">25-01-02</div>
<div class="cell cc" style="left:144px;top:372px;width:102px;height:28px">아아</div>
<div class="cell cc" style="left:246px;top:372px;width:38px;height:28px">유</div>
<div class="cell cc" style="left:284px;top:372px;width:137px;height:28px">크머리</div>
<div class="cell cc" style="left:421px;top:372px;width:61px;height:28px">1</div>
<div class="cell cc" style="left:482px;top:372px;width:92px;height:28px">*****</div>
<div class="cell cc" style="left:574px;top:372px;width:103px;height:28px">150,000</div>
<div class="cell cc" style="left:677px;top:372px;width:53px;height:28px">135</div>
<div class="cell cr" style="left:730px;top:372px;width:90px;height:28px;padding-right:2px">81,000</div>
<div class="cell cr" style="left:820px;top:372px;width:101px;height:28px;padding-right:2px">10,714</div>
<div class="cell cr" style="left:921px;top:372px;width:103px;height:28px;padding-right:2px">10,714</div>
<div class="cell cr" style="left:1024px;top:372px;width:98px;height:28px;padding-right:2px">150,000</div>
<div class="cell cc" style="left:1122px;top:372px;width:123px;height:28px">25-01-02|150000</div>
<div class="cell cc" style="left:1245px;top:372px;width:55px;height:28px">아아</div>
<div class="cell cc" style="left:1300px;top:372px;width:143px;height:28px">25-01-02|150000|아아</div>
<div class="cell cr" style="left:1446px;top:372px;width:89px;height:28px;padding-right:8px">81,000</div>
<div class="cell cr" style="left:1535px;top:372px;width:91px;height:28px;padding-right:8px">10,714</div>
<div class="cell cr" style="left:1626px;top:372px;width:103px;height:28px;padding-right:8px">10,714</div>
<div class="cell cc" style="left:38px;top:400px;width:36px;height:28px">7</div>
<div class="cell cc" style="left:74px;top:400px;width:70px;height:28px">25-01-02</div>
<div class="cell cc" style="left:144px;top:400px;width:102px;height:28px">아아</div>
<div class="cell cc" style="left:246px;top:400px;width:38px;height:28px">하</div>
<div class="cell cc" style="left:284px;top:400px;width:137px;height:28px">L큐빅</div>
<div class="cell cc" style="left:421px;top:400px;width:61px;height:28px">2</div>
<div class="cell cc" style="left:482px;top:400px;width:92px;height:28px">*****</div>
<div class="cell cc" style="left:677px;top:400px;width:53px;height:28px">135</div>
<div class="cell cr" style="left:820px;top:400px;width:101px;height:28px;padding-right:2px">10,714</div>
<div class="cell cr" style="left:921px;top:400px;width:103px;height:28px;padding-right:2px">21,429</div>
<div class="cell cr" style="left:1024px;top:400px;width:98px;height:28px;padding-right:2px">150,000</div>
<div class="cell cc" style="left:1122px;top:400px;width:123px;height:28px">25-01-02|150000</div>
<div class="cell cc" style="left:1245px;top:400px;width:55px;height:28px">아아</div>
<div class="cell cc" style="left:1300px;top:400px;width:143px;height:28px">25-01-02|150000|아아</div>
<div class="cell cr" style="left:1535px;top:400px;width:91px;height:28px;padding-right:8px">10,714</div>
<div class="cell cr" style="left:1626px;top:400px;width:103px;height:28px;padding-right:8px">21,429</div>
<div class="cell cc" style="left:38px;top:428px;width:36px;height:28px">8</div>
<div class="cell cc" style="left:74px;top:428px;width:70px;height:28px">25-01-02</div>
<div class="cell cc" style="left:144px;top:428px;width:102px;height:28px">한업</div>
<div class="cell cc" style="left:246px;top:428px;width:38px;height:28px">하</div>
<div class="cell cc" style="left:284px;top:428px;width:137px;height:28px">크이트</div>
<div class="cell cc" style="left:421px;top:428px;width:61px;height:28px">2</div>
<div class="cell cc" style="left:482px;top:428px;width:92px;height:28px">*****</div>
<div class="cell cc" style="left:677px;top:428px;width:53px;height:28px">60</div>
<div class="cell cr" style="left:730px;top:428px;width:90px;height:28px;padding-right:2px">36,000</div>
<div class="cell cr" style="left:820px;top:428px;width:101px;height:28px;padding-right:2px">10,714</div>
<div class="cell cr" style="left:921px;top:428px;width:103px;height:28px;padding-right:2px">21,429</div>
<div class="cell cr" style="left:1024px;top:428px;width:98px;height:28px;padding-right:2px">150,000</div>
<div class="cell cc" style="left:1122px;top:428px;width:123px;height:28px">25-01-02|150000</div>
<div class="cell cc" style="left:1245px;top:428px;width:55px;height:28px">한업</div>
<div class="cell cc" style="left:1300px;top:428px;width:143px;height:28px">25-01-02|150000|한업</div>
<div class="cell cr" style="left:1446px;top:428px;width:89px;height:28px;padding-right:8px">36,000</div>
<div class="cell cr" style="left:1535px;top:428px;width:91px;height:28px;padding-right:8px">10,714</div>
<div class="cell cr" style="left:1626px;top:428px;width:103px;height:28px;padding-right:8px">21,429</div>
<div class="cell cc" style="left:38px;top:456px;width:36px;height:28px">9</div>
<div class="cell cc" style="left:74px;top:456px;width:70px;height:28px">25-01-02</div>
<div class="cell cc" style="left:144px;top:456px;width:102px;height:28px">유엘</div>
<div class="cell cc" style="left:246px;top:456px;width:38px;height:28px">하</div>
<div class="cell cc" style="left:284px;top:456px;width:137px;height:28px">오메가</div>
<div class="cell cc" style="left:421px;top:456px;width:61px;height:28px">2</div>
<div class="cell cc" style="left:482px;top:456px;width:92px;height:28px">*****</div>
<div class="cell cc" style="left:677px;top:456px;width:53px;height:28px">55</div>
<div class="cell cr" style="left:730px;top:456px;width:90px;height:28px;padding-right:2px">33,000</div>
<div class="cell cr" style="left:820px;top:456px;width:101px;height:28px;padding-right:2px">10,714</div>
<div class="cell cr" style="left:921px;top:456px;width:103px;height:28px;padding-right:2px">21,429</div>
<div class="cell cr" style="left:1024px;top:456px;width:98px;height:28px;padding-right:2px">150,000</div>
<div class="cell cc" style="left:1122px;top:456px;width:123px;height:28px">25-01-02|150000</div>
<div class="cell cc" style="left:1245px;top:456px;width:55px;height:28px">유엘</div>
<div class="cell cc" style="left:1300px;top:456px;width:143px;height:28px">25-01-02|150000|유엘</div>
<div class="cell cr" style="left:1446px;top:456px;width:89px;height:28px;padding-right:8px">33,000</div>
<div class="cell cr" style="left:1535px;top:456px;width:91px;height:28px;padding-right:8px">10,714</div>
<div class="cell cr" style="left:1626px;top:456px;width:103px;height:28px;padding-right:8px">21,429</div>
<div class="cell cc" style="left:38px;top:484px;width:36px;height:28px">10</div>
<div class="cell cc" style="left:74px;top:484px;width:70px;height:28px">25-01-02</div>
<div class="cell cc" style="left:144px;top:484px;width:102px;height:28px">유엘</div>
<div class="cell cc" style="left:246px;top:484px;width:38px;height:28px">유</div>
<div class="cell cc" style="left:284px;top:484px;width:137px;height:28px">카블랑</div>
<div class="cell cc" style="left:421px;top:484px;width:61px;height:28px">7</div>
<div class="cell cc" style="left:482px;top:484px;width:92px;height:28px">*****</div>
<div class="cell cc" style="left:677px;top:484px;width:53px;height:28px">55</div>
<div class="cell cr" style="left:820px;top:484px;width:101px;height:28px;padding-right:2px">10,714</div>
<div class="cell cr" style="left:921px;top:484px;width:103px;height:28px;padding-right:2px">75,000</div>
<div class="cell cr" style="left:1024px;top:484px;width:98px;height:28px;padding-right:2px">150,000</div>
<div class="cell cc" style="left:1122px;top:484px;width:123px;height:28px">25-01-02|150000</div>
<div class="cell cc" style="left:1245px;top:484px;width:55px;height:28px">유엘</div>
<div class="cell cc" style="left:1300px;top:484px;width:143px;height:28px">25-01-02|150000|유엘</div>
<div class="cell cr" style="left:1535px;top:484px;width:91px;height:28px;padding-right:8px">10,714</div>
<div class="cell cr" style="left:1626px;top:484px;width:103px;height:28px;padding-right:8px">75,000</div>
<div class="cell cc" style="left:38px;top:512px;width:36px;height:28px">11</div>
<div class="cell cc" style="left:74px;top:512px;width:70px;height:28px">25-01-02</div>
<div class="cell cc" style="left:144px;top:512px;width:102px;height:28px">퍼톤</div>
<div class="cell cc" style="left:246px;top:512px;width:38px;height:28px">하</div>
<div class="cell cc" style="left:284px;top:512px;width:137px;height:28px">하스트</div>
<div class="cell cc" style="left:421px;top:512px;width:61px;height:28px">227</div>
<div class="cell cc" style="left:482px;top:512px;width:92px;height:28px">*****</div>
<div class="cell cc" style="left:574px;top:512px;width:103px;height:28px">0</div>
<div class="cell cc" style="left:677px;top:512px;width:53px;height:28px">15</div>
<div class="cell cr" style="left:730px;top:512px;width:90px;height:28px;padding-right:2px">0</div>
<div class="cell cr" style="left:820px;top:512px;width:101px;height:28px;padding-right:2px">0</div>
<div class="cell cr" style="left:921px;top:512px;width:103px;height:28px;padding-right:2px">0</div>
<div class="cell cr" style="left:1024px;top:512px;width:98px;height:28px;padding-right:2px">0</div>
<div class="cell cc" style="left:1122px;top:512px;width:123px;height:28px">25-01-02|0</div>
<div class="cell cc" style="left:1245px;top:512px;width:55px;height:28px">퍼톤</div>
<div class="cell cc" style="left:1300px;top:512px;width:143px;height:28px">25-01-02|0|퍼톤</div>
<div class="cell cr" style="left:1446px;top:512px;width:89px;height:28px;padding-right:8px">-</div>
<div class="cell cr" style="left:1535px;top:512px;width:91px;height:28px;padding-right:8px">-</div>
<div class="cell cc" style="left:38px;top:540px;width:36px;height:28px">12</div>
<div class="cell cc" style="left:74px;top:540px;width:70px;height:28px">25-01-03</div>
<div class="cell cc" style="left:144px;top:540px;width:102px;height:28px">제업</div>
<div class="cell cc" style="left:246px;top:540px;width:38px;height:28px">유</div>
<div class="cell cc" style="left:284px;top:540px;width:137px;height:28px">실트랙</div>
<div class="cell cc" style="left:421px;top:540px;width:61px;height:28px">40</div>
<div class="cell cc" style="left:482px;top:540px;width:92px;height:28px">*****</div>
<div class="cell cc" style="left:574px;top:540px;width:103px;height:28px">120,000</div>
<div class="cell cc" style="left:677px;top:540px;width:53px;height:28px">140</div>
<div class="cell cr" style="left:730px;top:540px;width:90px;height:28px;padding-right:2px">857</div>
<div class="cell cr" style="left:820px;top:540px;width:101px;height:28px;padding-right:2px">1,714</div>
<div class="cell cr" style="left:921px;top:540px;width:103px;height:28px;padding-right:2px">68,571</div>
<div class="cell cr" style="left:1024px;top:540px;width:98px;height:28px;padding-right:2px">120,000</div>
<div class="cell cc" style="left:1122px;top:540px;width:123px;height:28px">25-01-03|120000</div>
<div class="cell cc" style="left:1245px;top:540px;width:55px;height:28px">제업</div>
<div class="cell cc" style="left:1300px;top:540px;width:143px;height:28px">25-01-03|120000|제업</div>
<div class="cell cc" style="left:38px;top:568px;width:36px;height:28px">13</div>
<div class="cell cc" style="left:74px;top:568px;width:70px;height:28px">25-01-03</div>
<div class="cell cc" style="left:144px;top:568px;width:102px;height:28px">제업</div>
<div class="cell cc" style="left:246px;top:568px;width:38px;height:28px">유</div>
<div class="cell cc" style="left:284px;top:568px;width:137px;height:28px">밀크티</div>
<div class="cell cc" style="left:421px;top:568px;width:61px;height:28px">10</div>
<div class="cell cc" style="left:482px;top:568px;width:92px;height:28px">*****</div>
<div class="cell cc" style="left:677px;top:568px;width:53px;height:28px">140</div>
<div class="cell cr" style="left:820px;top:568px;width:101px;height:28px;padding-right:2px">1,714</div>
<div class="cell cr" style="left:921px;top:568px;width:103px;height:28px;padding-right:2px">17,143</div>
<div class="cell cr" style="left:1024px;top:568px;width:98px;height:28px;padding-right:2px">120,000</div>
<div class="cell cc" style="left:1122px;top:568px;width:123px;height:28px">25-01-03|120000</div>
<div class="cell cc" style="left:1245px;top:568px;width:55px;height:28px">제업</div>
<div class="cell cc" style="left:1300px;top:568px;width:143px;height:28px">25-01-03|120000|제업</div>
<div class="cell cc" style="left:38px;top:596px;width:36px;height:28px">14</div>
<div class="cell cc" style="left:74px;top:596px;width:70px;height:28px">25-01-03</div>
<div class="cell cc" style="left:144px;top:596px;width:102px;height:28px">제업</div>
<div class="cell cc" style="left:246px;top:596px;width:38px;height:28px">유</div>
<div class="cell cc" style="left:284px;top:596px;width:137px;height:28px">포폴로</div>
<div class="cell cc" style="left:421px;top:596px;width:61px;height:28px">10</div>
<div class="cell cc" style="left:482px;top:596px;width:92px;height:28px">*****</div>
<div class="cell cc" style="left:677px;top:596px;width:53px;height:28px">140</div>
<div class="cell cr" style="left:820px;top:596px;width:101px;height:28px;padding-right:2px">1,714</div>
<div class="cell cr" style="left:921px;top:596px;width:103px;height:28px;padding-right:2px">17,143</div>
<div class="cell cr" style="left:1024px;top:596px;width:98px;height:28px;padding-right:2px">120,000</div>
<div class="cell cc" style="left:1122px;top:596px;width:123px;height:28px">25-01-03|120000</div>
<div class="cell cc" style="left:1245px;top:596px;width:55px;height:28px">제업</div>
<div class="cell cc" style="left:1300px;top:596px;width:143px;height:28px">25-01-03|120000|제업</div>
<div class="cell cc" style="left:38px;top:624px;width:36px;height:28px">15</div>
<div class="cell cc" style="left:74px;top:624px;width:70px;height:28px">25-01-03</div>
<div class="cell cc" style="left:144px;top:624px;width:102px;height:28px">제업</div>
<div class="cell cc" style="left:246px;top:624px;width:38px;height:28px">유</div>
<div class="cell cc" style="left:284px;top:624px;width:137px;height:28px">아스탈</div>
<div class="cell cc" style="left:421px;top:624px;width:61px;height:28px">10</div>
<div class="cell cc" style="left:482px;top:624px;width:92px;height:28px">*****</div>
<div class="cell cc" style="left:677px;top:624px;width:53px;height:28px">140</div>
<div class="cell cr" style="left:820px;top:624px;width:101px;height:28px;padding-right:2px">1,714</div>
<div class="cell cr" style="left:921px;top:624px;width:103px;height:28px;padding-right:2px">17,143</div>
<div class="cell cr" style="left:1024px;top:624px;width:98px;height:28px;padding-right:2px">120,000</div>
<div class="cell cc" style="left:1122px;top:624px;width:123px;height:28px">25-01-03|120000</div>
<div class="cell cc" style="left:1245px;top:624px;width:55px;height:28px">제업</div>
<div class="cell cc" style="left:1300px;top:624px;width:143px;height:28px">25-01-03|120000|제업</div>
<div class="cell cc" style="left:38px;top:652px;width:36px;height:28px">16</div>
<div class="cell cc" style="left:74px;top:652px;width:70px;height:28px">25-01-03</div>
<div class="cell cc" style="left:144px;top:652px;width:102px;height:28px">신크</div>
<div class="cell cc" style="left:246px;top:652px;width:38px;height:28px">유</div>
<div class="cell cc" style="left:284px;top:652px;width:137px;height:28px">스트랙</div>
<div class="cell cc" style="left:421px;top:652px;width:61px;height:28px">20</div>
<div class="cell cc" style="left:482px;top:652px;width:92px;height:28px">*****</div>
<div class="cell cc" style="left:574px;top:652px;width:103px;height:28px">60,000</div>
<div class="cell cc" style="left:677px;top:652px;width:53px;height:28px">145</div>
<div class="cell cr" style="left:730px;top:652px;width:90px;height:28px;padding-right:2px">414</div>
<div class="cell cr" style="left:820px;top:652px;width:101px;height:28px;padding-right:2px">3,000</div>
<div class="cell cr" style="left:921px;top:652px;width:103px;height:28px;padding-right:2px">60,000</div>
<div class="cell cr" style="left:1024px;top:652px;width:98px;height:28px;padding-right:2px">60,000</div>
<div class="cell cc" style="left:1122px;top:652px;width:123px;height:28px">25-01-03|60000</div>
<div class="cell cc" style="left:1245px;top:652px;width:55px;height:28px">신크</div>
<div class="cell cc" style="left:1300px;top:652px;width:143px;height:28px">25-01-03|60000|신크</div>
<div class="cell cc" style="left:38px;top:680px;width:36px;height:28px">17</div>
<div class="cell cc" style="left:74px;top:680px;width:70px;height:28px">25-01-06</div>
<div class="cell cc" style="left:144px;top:680px;width:102px;height:28px">유엘</div>
<div class="cell cc" style="left:246px;top:680px;width:38px;height:28px">하</div>
<div class="cell cc" style="left:284px;top:680px;width:137px;height:28px">코리트</div>
<div class="cell cc" style="left:421px;top:680px;width:61px;height:28px">1</div>
<div class="cell cc" style="left:482px;top:680px;width:92px;height:28px">*****</div>
<div class="cell cc" style="left:574px;top:680px;width:103px;height:28px">70,000</div>
<div class="cell cc" style="left:677px;top:680px;width:53px;height:28px">55</div>
<div class="cell cr" style="left:730px;top:680px;width:90px;height:28px;padding-right:2px">1,273</div>
<div class="cell cr" style="left:820px;top:680px;width:101px;height:28px;padding-right:2px">11,667</div>
<div class="cell cr" style="left:921px;top:680px;width:103px;height:28px;padding-right:2px">11,667</div>
<div class="cell cr" style="left:1024px;top:680px;width:98px;height:28px;padding-right:2px">70,000</div>
<div class="cell cc" style="left:1122px;top:680px;width:123px;height:28px">25-01-06|70000</div>
<div class="cell cc" style="left:1245px;top:680px;width:55px;height:28px">유엘</div>
<div class="cell cc" style="left:1300px;top:680px;width:143px;height:28px">25-01-06|70000|유엘</div>
<div class="cell cc" style="left:38px;top:708px;width:36px;height:28px">18</div>
<div class="cell cc" style="left:74px;top:708px;width:70px;height:28px">25-01-06</div>
<div class="cell cc" style="left:144px;top:708px;width:102px;height:28px">유엘</div>
<div class="cell cc" style="left:246px;top:708px;width:38px;height:28px">유</div>
<div class="cell cc" style="left:284px;top:708px;width:137px;height:28px">포포실</div>
<div class="cell cc" style="left:421px;top:708px;width:61px;height:28px">5</div>
<div class="cell cc" style="left:482px;top:708px;width:92px;height:28px">*****</div>
<div class="cell cc" style="left:677px;top:708px;width:53px;height:28px">55</div>
<div class="cell cr" style="left:820px;top:708px;width:101px;height:28px;padding-right:2px">11,667</div>
<div class="cell cr" style="left:921px;top:708px;width:103px;height:28px;padding-right:2px">58,333</div>
<div class="cell cr" style="left:1024px;top:708px;width:98px;height:28px;padding-right:2px">70,000</div>
<div class="cell cc" style="left:1122px;top:708px;width:123px;height:28px">25-01-06|70000</div>
<div class="cell cc" style="left:1245px;top:708px;width:55px;height:28px">유엘</div>
<div class="cell cc" style="left:1300px;top:708px;width:143px;height:28px">25-01-06|70000|유엘</div>
<div class="cell cc" style="left:38px;top:736px;width:36px;height:28px">19</div>
<div class="cell cc" style="left:74px;top:736px;width:70px;height:28px">25-01-08</div>
<div class="cell cc" style="left:144px;top:736px;width:102px;height:28px">한업</div>
<div class="cell cc" style="left:246px;top:736px;width:38px;height:28px">하</div>
<div class="cell cc" style="left:284px;top:736px;width:137px;height:28px">퓨아틱</div>
<div class="cell cc" style="left:421px;top:736px;width:61px;height:28px">2</div>
<div class="cell cc" style="left:482px;top:736px;width:92px;height:28px">*****</div>
<div class="cell cc" style="left:574px;top:736px;width:103px;height:28px">80,000</div>
<div class="cell cc" style="left:677px;top:736px;width:53px;height:28px">60</div>
<div class="cell cr" style="left:730px;top:736px;width:90px;height:28px;padding-right:2px">1,333</div>
<div class="cell cr" style="left:820px;top:736px;width:101px;height:28px;padding-right:2px">40,000</div>
<div class="cell cr" style="left:921px;top:736px;width:103px;height:28px;padding-right:2px">80,000</div>
<div class="cell cr" style="left:1024px;top:736px;width:98px;height:28px;padding-right:2px">80,000</div>
<div class="cell cc" style="left:1122px;top:736px;width:123px;height:28px">25-01-08|80000</div>
<div class="cell cc" style="left:1245px;top:736px;width:55px;height:28px">한업</div>
<div class="cell cc" style="left:1300px;top:736px;width:143px;height:28px">25-01-08|80000|한업</div>
<div class="cell cc" style="left:38px;top:764px;width:36px;height:28px">20</div>
<div class="cell cc" style="left:74px;top:764px;width:70px;height:28px">25-01-09</div>
<div class="cell cc" style="left:144px;top:764px;width:102px;height:28px">유엘</div>
<div class="cell cc" style="left:246px;top:764px;width:38px;height:28px">유</div>
<div class="cell cc" style="left:284px;top:764px;width:137px;height:28px">쿼이블</div>
<div class="cell cc" style="left:421px;top:764px;width:61px;height:28px">5</div>
<div class="cell cc" style="left:482px;top:764px;width:92px;height:28px">*****</div>
<div class="cell cc" style="left:574px;top:764px;width:103px;height:28px">70,000</div>
<div class="cell cc" style="left:677px;top:764px;width:53px;height:28px">55</div>
<div class="cell cr" style="left:730px;top:764px;width:90px;height:28px;padding-right:2px">1,273</div>
<div class="cell cr" style="left:820px;top:764px;width:101px;height:28px;padding-right:2px">14,000</div>
<div class="cell cr" style="left:921px;top:764px;width:103px;height:28px;padding-right:2px">70,000</div>
<div class="cell cr" style="left:1024px;top:764px;width:98px;height:28px;padding-right:2px">70,000</div>
<div class="cell cc" style="left:1122px;top:764px;width:123px;height:28px">25-01-09|70000</div>
<div class="cell cc" style="left:1245px;top:764px;width:55px;height:28px">유엘</div>
<div class="cell cc" style="left:1300px;top:764px;width:143px;height:28px">25-01-09|70000|유엘</div>
<div class="cell cc" style="left:38px;top:792px;width:36px;height:28px">21</div>
<div class="cell cc" style="left:74px;top:792px;width:70px;height:28px">25-01-09</div>
<div class="cell cc" style="left:144px;top:792px;width:102px;height:28px">인톤</div>
<div class="cell cc" style="left:246px;top:792px;width:38px;height:28px">하</div>
<div class="cell cc" style="left:284px;top:792px;width:137px;height:28px">쿼레이</div>
<div class="cell cc" style="left:421px;top:792px;width:61px;height:28px">5</div>
<div class="cell cc" style="left:482px;top:792px;width:92px;height:28px">*****</div>
<div class="cell cc" style="left:574px;top:792px;width:103px;height:28px">60,000</div>
<div class="cell cc" style="left:677px;top:792px;width:53px;height:28px">90</div>
<div class="cell cr" style="left:730px;top:792px;width:90px;height:28px;padding-right:2px">667</div>
<div class="cell cr" style="left:820px;top:792px;width:101px;height:28px;padding-right:2px">5,455</div>
<div class="cell cr" style="left:921px;top:792px;width:103px;height:28px;padding-right:2px">27,273</div>
<div class="cell cr" style="left:1024px;top:792px;width:98px;height:28px;padding-right:2px">60,000</div>
<div class="cell cc" style="left:1122px;top:792px;width:123px;height:28px">25-01-09|60000</div>
<div class="cell cc" style="left:1245px;top:792px;width:55px;height:28px">인톤</div>
<div class="cell cc" style="left:1300px;top:792px;width:143px;height:28px">25-01-09|60000|인톤</div>
<div class="cell cc" style="left:38px;top:820px;width:36px;height:28px">22</div>
<div class="cell cc" style="left:74px;top:820px;width:70px;height:28px">25-01-09</div>
<div class="cell cc" style="left:144px;top:820px;width:102px;height:28px">인톤</div>
<div class="cell cc" style="left:246px;top:820px;width:38px;height:28px">유</div>
<div class="cell cc" style="left:284px;top:820px;width:137px;height:28px">실트랙</div>
<div class="cell cc" style="left:421px;top:820px;width:61px;height:28px">4</div>
<div class="cell cc" style="left:482px;top:820px;width:92px;height:28px">*****</div>
<div class="cell cc" style="left:677px;top:820px;width:53px;height:28px">90</div>
<div class="cell cr" style="left:820px;top:820px;width:101px;height:28px;padding-right:2px">5,455</div>
<div class="cell cr" style="left:921px;top:820px;width:103px;height:28px;padding-right:2px">21,818</div>
<div class="cell cr" style="left:1024px;top:820px;width:98px;height:28px;padding-right:2px">60,000</div>
<div class="cell cc" style="left:1122px;top:820px;width:123px;height:28px">25-01-09|60000</div>
<div class="cell cc" style="left:1245px;top:820px;width:55px;height:28px">인톤</div>
<div class="cell cc" style="left:1300px;top:820px;width:143px;height:28px">25-01-09|60000|인톤</div>
<div class="cell cc" style="left:38px;top:848px;width:36px;height:28px">23</div>
<div class="cell cc" style="left:74px;top:848px;width:70px;height:28px">25-01-09</div>
<div class="cell cc" style="left:144px;top:848px;width:102px;height:28px">인톤</div>
<div class="cell cc" style="left:246px;top:848px;width:38px;height:28px">유</div>
<div class="cell cc" style="left:284px;top:848px;width:137px;height:28px">포폴로</div>
<div class="cell cc" style="left:421px;top:848px;width:61px;height:28px">1</div>
<div class="cell cc" style="left:482px;top:848px;width:92px;height:28px">*****</div>
<div class="cell cc" style="left:677px;top:848px;width:53px;height:28px">90</div>
<div class="cell cr" style="left:820px;top:848px;width:101px;height:28px;padding-right:2px">5,455</div>
<div class="cell cr" style="left:921px;top:848px;width:103px;height:28px;padding-right:2px">5,455</div>
<div class="cell cr" style="left:1024px;top:848px;width:98px;height:28px;padding-right:2px">60,000</div>
<div class="cell cc" style="left:1122px;top:848px;width:123px;height:28px">25-01-09|60000</div>
<div class="cell cc" style="left:1245px;top:848px;width:55px;height:28px">인톤</div>
<div class="cell cc" style="left:1300px;top:848px;width:143px;height:28px">25-01-09|60000|인톤</div>
<div class="cell cc" style="left:38px;top:876px;width:36px;height:28px">24</div>
<div class="cell cc" style="left:74px;top:876px;width:70px;height:28px">25-01-09</div>
<div class="cell cc" style="left:144px;top:876px;width:102px;height:28px">인톤</div>
<div class="cell cc" style="left:246px;top:876px;width:38px;height:28px">유</div>
<div class="cell cc" style="left:284px;top:876px;width:137px;height:28px">퓨이트</div>
<div class="cell cc" style="left:421px;top:876px;width:61px;height:28px">1</div>
<div class="cell cc" style="left:482px;top:876px;width:92px;height:28px">*****</div>
<div class="cell cc" style="left:677px;top:876px;width:53px;height:28px">90</div>
<div class="cell cr" style="left:820px;top:876px;width:101px;height:28px;padding-right:2px">5,455</div>
<div class="cell cr" style="left:921px;top:876px;width:103px;height:28px;padding-right:2px">5,455</div>
<div class="cell cr" style="left:1024px;top:876px;width:98px;height:28px;padding-right:2px">60,000</div>
<div class="cell cc" style="left:1122px;top:876px;width:123px;height:28px">25-01-09|60000</div>
<div class="cell cc" style="left:1245px;top:876px;width:55px;height:28px">인톤</div>
<div class="cell cc" style="left:1300px;top:876px;width:143px;height:28px">25-01-09|60000|인톤</div>
<div class="cell cc" style="left:38px;top:904px;width:36px;height:28px">25</div>
<div class="cell cc" style="left:74px;top:904px;width:70px;height:28px">25-01-10</div>
<div class="cell cc" style="left:144px;top:904px;width:102px;height:28px">아아</div>
<div class="cell cc" style="left:246px;top:904px;width:38px;height:28px">하</div>
<div class="cell cc" style="left:284px;top:904px;width:137px;height:28px">L큐빅</div>
<div class="cell cc" style="left:421px;top:904px;width:61px;height:28px">2</div>
<div class="cell cc" style="left:482px;top:904px;width:92px;height:28px">*****</div>
<div class="cell cc" style="left:574px;top:904px;width:103px;height:28px">65,000</div>
<div class="cell cc" style="left:677px;top:904px;width:53px;height:28px">135</div>
<div class="cell cr" style="left:730px;top:904px;width:90px;height:28px;padding-right:2px">481</div>
<div class="cell cr" style="left:820px;top:904px;width:101px;height:28px;padding-right:2px">32,500</div>
<div class="cell cr" style="left:921px;top:904px;width:103px;height:28px;padding-right:2px">65,000</div>
<div class="cell cr" style="left:1024px;top:904px;width:98px;height:28px;padding-right:2px">65,000</div>
<div class="cell cc" style="left:1122px;top:904px;width:123px;height:28px">25-01-10|65000</div>
<div class="cell cc" style="left:1245px;top:904px;width:55px;height:28px">아아</div>
<div class="cell cc" style="left:1300px;top:904px;width:143px;height:28px">25-01-10|65000|아아</div>
<div style="position:absolute;left:814px;top:401px;width:0px;height:0px;border-left:6px solid transparent;border-top:6px solid #e0201b"></div>
<div style="position:absolute;left:1895px;top:172px;width:18px;height:764px;background:#0d0d0d"></div>
<div style="position:absolute;left:1897px;top:172px;width:16px;height:762px;background:#171717;border-radius:8px"></div>
<div style="position:absolute;left:1899px;top:175px;width:12px;height:14px;border-radius:6px"></div>
<div style="position:absolute;left:1901px;top:177px;width:0px;height:0px;border-left:5px solid transparent;border-right:5px solid transparent;border-bottom:7px solid #9a9a9a"></div>
<div style="position:absolute;left:1902px;top:189px;width:9px;height:17px;background:#9a9a9a;border-radius:4.5px"></div>
<div style="position:absolute;left:1900px;top:924px;width:0px;height:0px;border-left:5px solid transparent;border-right:5px solid transparent;border-top:6px solid #9a9a9a"></div>
<div style="position:absolute;left:22px;top:936px;width:1873px;height:6px;background:#fff"></div>
<div style="position:absolute;left:0px;top:936px;width:113px;height:32px;background:#0a0a0a;border-top-right-radius:4px"></div>
<div style="position:absolute;left:186px;top:936px;width:1727px;height:32px;background:#0a0a0a;border-top-left-radius:4px"></div>
<div style="position:absolute;left:113px;top:936px;width:73px;height:28px;background:#fff;border-radius:0 0 6px 6px"></div>
<div class="t" style="left:122px;top:942px;font-size:13.5px;color:#1a1a1a">출고이력</div>
<div style="position:absolute;left:122px;top:959px;width:55px;height:2px;background:#1f7a3c"></div>
<div style="position:absolute;left:189px;top:943px;width:1px;height:17px;background:#5a5a5a"></div>
<div class="t" style="left:203px;top:945px;font-size:14px;color:#e6e6e6">Sheet1</div>
<div style="position:absolute;left:259px;top:943px;width:1px;height:17px;background:#5a5a5a"></div>
<svg class="a" style="left:301px;top:946px;" width="13" height="13" viewBox="0 0 13 13"><path d="M6.5 0.5V12.5M0.5 6.5H12.5" stroke="#d8d8d8" stroke-width="1.3"/></svg>
<svg class="a" style="left:24px;top:946px;" width="10" height="12" viewBox="0 0 10 12"><path d="M8 1L2 6L8 11" fill="none" stroke="#bdbdbd" stroke-width="1.2"/></svg>
<svg class="a" style="left:56px;top:946px;" width="10" height="12" viewBox="0 0 10 12"><path d="M2 1L8 6L2 11" fill="none" stroke="#bdbdbd" stroke-width="1.2"/></svg>
<div style="position:absolute;left:1151px;top:946px;width:2px;height:2px;background:#e0e0e0"></div>
<div style="position:absolute;left:1151px;top:951px;width:2px;height:2px;background:#e0e0e0"></div>
<div style="position:absolute;left:1151px;top:956px;width:2px;height:2px;background:#e0e0e0"></div>
<div style="position:absolute;left:1168px;top:943px;width:727px;height:17px;background:#171717;border-radius:9px"></div>
<div style="position:absolute;left:1173px;top:947px;width:0px;height:0px;border-top:4.5px solid transparent;border-bottom:4.5px solid transparent;border-right:7px solid #9a9a9a"></div>
<div style="position:absolute;left:1185px;top:947px;width:686px;height:9px;background:#9a9a9a;border-radius:5px"></div>
<div style="position:absolute;left:1884px;top:947px;width:0px;height:0px;border-top:4.5px solid transparent;border-bottom:4.5px solid transparent;border-left:7px solid #9a9a9a"></div>
<div style="position:absolute;left:0px;top:968px;width:1913px;height:8px;background:#1f1f1f"></div>
<div style="position:absolute;left:0px;top:967px;width:1913px;height:1px;background:#333"></div>
<div class="t" style="left:10px;top:970px;font-size:12px;color:#d0d0d0">준비</div>
<div style="position:absolute;left:52px;top:971px;width:13px;height:6px;border:1px solid #d0d0d0;border-bottom:none"></div>
<div class="t" style="left:84px;top:970px;font-size:12px;color:#d0d0d0">접근성: 조사 필요</div>
<div style="position:absolute;left:1612px;top:968px;width:40px;height:8px;background:#2e2e2e"></div>
<div style="position:absolute;left:1625px;top:972px;width:14px;height:5px;border:1.5px solid #d0d0d0;border-bottom:none"></div>
<div style="position:absolute;left:1665px;top:972px;width:14px;height:5px;border:1.5px solid #d0d0d0;border-bottom:none"></div>
<div style="position:absolute;left:1705px;top:972px;width:14px;height:5px;border:1.5px solid #d0d0d0;border-bottom:none"></div>
<div style="position:absolute;left:1793px;top:971px;width:3px;height:5px;background:#bdbdbd"></div>
<div class="t" style="left:1880px;top:970px;font-size:12px;color:#d0d0d0">85%</div>
</body></html>
